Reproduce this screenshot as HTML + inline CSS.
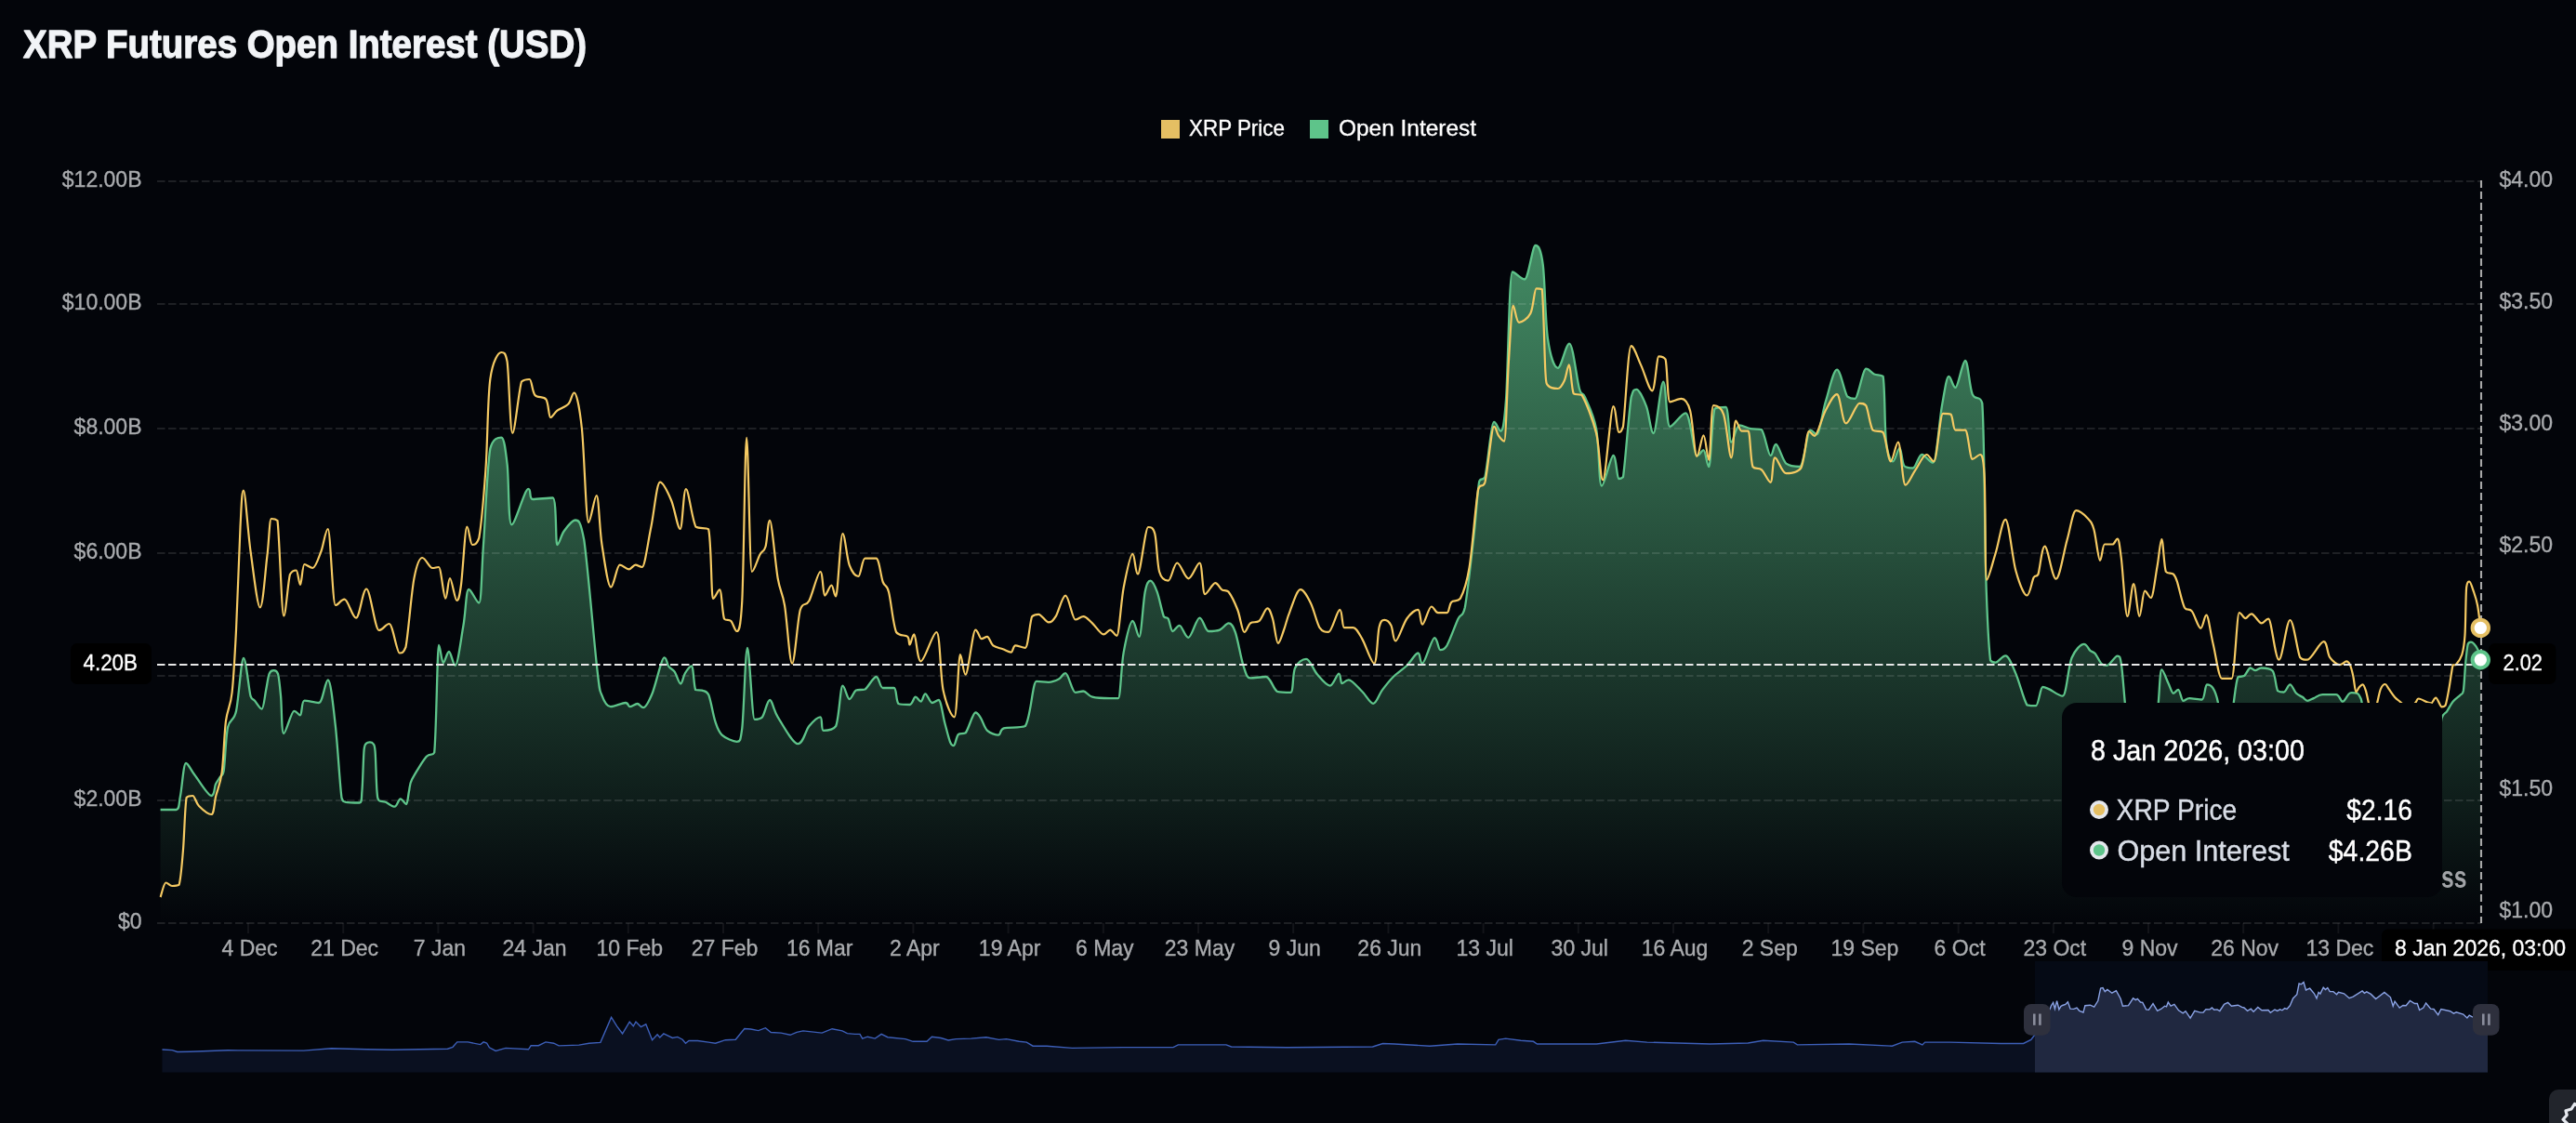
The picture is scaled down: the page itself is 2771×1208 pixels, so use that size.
<!DOCTYPE html><html><head><meta charset="utf-8"><style>html,body{margin:0;padding:0;background:#03050a;overflow:hidden}svg{display:block;will-change:transform}</style></head><body>
<svg width="2771" height="1208" viewBox="0 0 2771 1208">
<defs>
<linearGradient id="ga" gradientUnits="userSpaceOnUse" x1="0" y1="264" x2="0" y2="993"><stop offset="0" stop-color="#5ec48a" stop-opacity="0.7"/><stop offset="1" stop-color="#5ec48a" stop-opacity="0"/></linearGradient>
<linearGradient id="gsel" gradientUnits="userSpaceOnUse" x1="0" y1="1034" x2="0" y2="1153"><stop offset="0" stop-color="#1a2138"/><stop offset="1" stop-color="#242c4a"/></linearGradient>
</defs>
<rect width="2771" height="1208" fill="#03050a"/>
<text x="25" y="62" font-family="&quot;Liberation Sans&quot;, sans-serif" font-weight="bold" font-size="42" fill="#f2f4f7" stroke="#f2f4f7" stroke-width="1.3" stroke-linejoin="round" textLength="606" lengthAdjust="spacingAndGlyphs">XRP Futures Open Interest (USD)</text>
<rect x="1249" y="129" width="20" height="20" fill="#e5bf63"/>
<text x="1279" y="146" font-family="&quot;Liberation Sans&quot;, sans-serif" font-size="24" fill="#ffffff" stroke="#ffffff" stroke-width="0.35" textLength="103" lengthAdjust="spacingAndGlyphs">XRP Price</text>
<rect x="1409" y="129" width="20" height="20" fill="#5ec48a"/>
<text x="1440" y="146" font-family="&quot;Liberation Sans&quot;, sans-serif" font-size="24" fill="#ffffff" stroke="#ffffff" stroke-width="0.35" textLength="148" lengthAdjust="spacingAndGlyphs">Open Interest</text>
<text x="152.5" y="201" font-family="&quot;Liberation Sans&quot;, sans-serif" font-size="23" fill="#a9abae" stroke="#a9abae" stroke-width="0.35" text-anchor="end">$12.00B</text>
<text x="152.5" y="333" font-family="&quot;Liberation Sans&quot;, sans-serif" font-size="23" fill="#a9abae" stroke="#a9abae" stroke-width="0.35" text-anchor="end">$10.00B</text>
<text x="152.5" y="467" font-family="&quot;Liberation Sans&quot;, sans-serif" font-size="23" fill="#a9abae" stroke="#a9abae" stroke-width="0.35" text-anchor="end">$8.00B</text>
<text x="152.5" y="601" font-family="&quot;Liberation Sans&quot;, sans-serif" font-size="23" fill="#a9abae" stroke="#a9abae" stroke-width="0.35" text-anchor="end">$6.00B</text>
<text x="152.5" y="733" font-family="&quot;Liberation Sans&quot;, sans-serif" font-size="23" fill="#a9abae" stroke="#a9abae" stroke-width="0.35" text-anchor="end">$4.00B</text>
<text x="152.5" y="867" font-family="&quot;Liberation Sans&quot;, sans-serif" font-size="23" fill="#a9abae" stroke="#a9abae" stroke-width="0.35" text-anchor="end">$2.00B</text>
<text x="152.5" y="999" font-family="&quot;Liberation Sans&quot;, sans-serif" font-size="23" fill="#a9abae" stroke="#a9abae" stroke-width="0.35" text-anchor="end">$0</text>
<text x="2688.5" y="201" font-family="&quot;Liberation Sans&quot;, sans-serif" font-size="23" fill="#a9abae" stroke="#a9abae" stroke-width="0.35">$4.00</text>
<text x="2688.5" y="332" font-family="&quot;Liberation Sans&quot;, sans-serif" font-size="23" fill="#a9abae" stroke="#a9abae" stroke-width="0.35">$3.50</text>
<text x="2688.5" y="463" font-family="&quot;Liberation Sans&quot;, sans-serif" font-size="23" fill="#a9abae" stroke="#a9abae" stroke-width="0.35">$3.00</text>
<text x="2688.5" y="594" font-family="&quot;Liberation Sans&quot;, sans-serif" font-size="23" fill="#a9abae" stroke="#a9abae" stroke-width="0.35">$2.50</text>
<text x="2688.5" y="725" font-family="&quot;Liberation Sans&quot;, sans-serif" font-size="23" fill="#a9abae" stroke="#a9abae" stroke-width="0.35">$2.00</text>
<text x="2688.5" y="856" font-family="&quot;Liberation Sans&quot;, sans-serif" font-size="23" fill="#a9abae" stroke="#a9abae" stroke-width="0.35">$1.50</text>
<text x="2688.5" y="987" font-family="&quot;Liberation Sans&quot;, sans-serif" font-size="23" fill="#a9abae" stroke="#a9abae" stroke-width="0.35">$1.00</text>
<line x1="267.0" y1="993" x2="267.0" y2="1004" stroke="#131419" stroke-width="2"/>
<line x1="369.2" y1="993" x2="369.2" y2="1004" stroke="#131419" stroke-width="2"/>
<line x1="471.4" y1="993" x2="471.4" y2="1004" stroke="#131419" stroke-width="2"/>
<line x1="573.6" y1="993" x2="573.6" y2="1004" stroke="#131419" stroke-width="2"/>
<line x1="675.8" y1="993" x2="675.8" y2="1004" stroke="#131419" stroke-width="2"/>
<line x1="778.0" y1="993" x2="778.0" y2="1004" stroke="#131419" stroke-width="2"/>
<line x1="880.2" y1="993" x2="880.2" y2="1004" stroke="#131419" stroke-width="2"/>
<line x1="982.4" y1="993" x2="982.4" y2="1004" stroke="#131419" stroke-width="2"/>
<line x1="1084.6" y1="993" x2="1084.6" y2="1004" stroke="#131419" stroke-width="2"/>
<line x1="1186.8000000000002" y1="993" x2="1186.8000000000002" y2="1004" stroke="#131419" stroke-width="2"/>
<line x1="1289.0" y1="993" x2="1289.0" y2="1004" stroke="#131419" stroke-width="2"/>
<line x1="1391.2" y1="993" x2="1391.2" y2="1004" stroke="#131419" stroke-width="2"/>
<line x1="1493.4" y1="993" x2="1493.4" y2="1004" stroke="#131419" stroke-width="2"/>
<line x1="1595.6000000000001" y1="993" x2="1595.6000000000001" y2="1004" stroke="#131419" stroke-width="2"/>
<line x1="1697.8" y1="993" x2="1697.8" y2="1004" stroke="#131419" stroke-width="2"/>
<line x1="1800.0" y1="993" x2="1800.0" y2="1004" stroke="#131419" stroke-width="2"/>
<line x1="1902.2" y1="993" x2="1902.2" y2="1004" stroke="#131419" stroke-width="2"/>
<line x1="2004.4" y1="993" x2="2004.4" y2="1004" stroke="#131419" stroke-width="2"/>
<line x1="2106.6000000000004" y1="993" x2="2106.6000000000004" y2="1004" stroke="#131419" stroke-width="2"/>
<line x1="2208.8" y1="993" x2="2208.8" y2="1004" stroke="#131419" stroke-width="2"/>
<line x1="2311.0" y1="993" x2="2311.0" y2="1004" stroke="#131419" stroke-width="2"/>
<line x1="2413.2000000000003" y1="993" x2="2413.2000000000003" y2="1004" stroke="#131419" stroke-width="2"/>
<line x1="2515.4" y1="993" x2="2515.4" y2="1004" stroke="#131419" stroke-width="2"/>
<line x1="2617.6" y1="993" x2="2617.6" y2="1004" stroke="#131419" stroke-width="2"/>
<text x="268.5" y="1028" font-family="&quot;Liberation Sans&quot;, sans-serif" font-size="23" fill="#a9abae" stroke="#a9abae" stroke-width="0.35" text-anchor="middle">4 Dec</text>
<text x="370.7" y="1028" font-family="&quot;Liberation Sans&quot;, sans-serif" font-size="23" fill="#a9abae" stroke="#a9abae" stroke-width="0.35" text-anchor="middle">21 Dec</text>
<text x="472.9" y="1028" font-family="&quot;Liberation Sans&quot;, sans-serif" font-size="23" fill="#a9abae" stroke="#a9abae" stroke-width="0.35" text-anchor="middle">7 Jan</text>
<text x="575.1" y="1028" font-family="&quot;Liberation Sans&quot;, sans-serif" font-size="23" fill="#a9abae" stroke="#a9abae" stroke-width="0.35" text-anchor="middle">24 Jan</text>
<text x="677.3" y="1028" font-family="&quot;Liberation Sans&quot;, sans-serif" font-size="23" fill="#a9abae" stroke="#a9abae" stroke-width="0.35" text-anchor="middle">10 Feb</text>
<text x="779.5" y="1028" font-family="&quot;Liberation Sans&quot;, sans-serif" font-size="23" fill="#a9abae" stroke="#a9abae" stroke-width="0.35" text-anchor="middle">27 Feb</text>
<text x="881.7" y="1028" font-family="&quot;Liberation Sans&quot;, sans-serif" font-size="23" fill="#a9abae" stroke="#a9abae" stroke-width="0.35" text-anchor="middle">16 Mar</text>
<text x="983.9" y="1028" font-family="&quot;Liberation Sans&quot;, sans-serif" font-size="23" fill="#a9abae" stroke="#a9abae" stroke-width="0.35" text-anchor="middle">2 Apr</text>
<text x="1086.1" y="1028" font-family="&quot;Liberation Sans&quot;, sans-serif" font-size="23" fill="#a9abae" stroke="#a9abae" stroke-width="0.35" text-anchor="middle">19 Apr</text>
<text x="1188.3" y="1028" font-family="&quot;Liberation Sans&quot;, sans-serif" font-size="23" fill="#a9abae" stroke="#a9abae" stroke-width="0.35" text-anchor="middle">6 May</text>
<text x="1290.5" y="1028" font-family="&quot;Liberation Sans&quot;, sans-serif" font-size="23" fill="#a9abae" stroke="#a9abae" stroke-width="0.35" text-anchor="middle">23 May</text>
<text x="1392.7" y="1028" font-family="&quot;Liberation Sans&quot;, sans-serif" font-size="23" fill="#a9abae" stroke="#a9abae" stroke-width="0.35" text-anchor="middle">9 Jun</text>
<text x="1494.9" y="1028" font-family="&quot;Liberation Sans&quot;, sans-serif" font-size="23" fill="#a9abae" stroke="#a9abae" stroke-width="0.35" text-anchor="middle">26 Jun</text>
<text x="1597.1" y="1028" font-family="&quot;Liberation Sans&quot;, sans-serif" font-size="23" fill="#a9abae" stroke="#a9abae" stroke-width="0.35" text-anchor="middle">13 Jul</text>
<text x="1699.3" y="1028" font-family="&quot;Liberation Sans&quot;, sans-serif" font-size="23" fill="#a9abae" stroke="#a9abae" stroke-width="0.35" text-anchor="middle">30 Jul</text>
<text x="1801.5" y="1028" font-family="&quot;Liberation Sans&quot;, sans-serif" font-size="23" fill="#a9abae" stroke="#a9abae" stroke-width="0.35" text-anchor="middle">16 Aug</text>
<text x="1903.7" y="1028" font-family="&quot;Liberation Sans&quot;, sans-serif" font-size="23" fill="#a9abae" stroke="#a9abae" stroke-width="0.35" text-anchor="middle">2 Sep</text>
<text x="2005.9" y="1028" font-family="&quot;Liberation Sans&quot;, sans-serif" font-size="23" fill="#a9abae" stroke="#a9abae" stroke-width="0.35" text-anchor="middle">19 Sep</text>
<text x="2108.1" y="1028" font-family="&quot;Liberation Sans&quot;, sans-serif" font-size="23" fill="#a9abae" stroke="#a9abae" stroke-width="0.35" text-anchor="middle">6 Oct</text>
<text x="2210.3" y="1028" font-family="&quot;Liberation Sans&quot;, sans-serif" font-size="23" fill="#a9abae" stroke="#a9abae" stroke-width="0.35" text-anchor="middle">23 Oct</text>
<text x="2312.5" y="1028" font-family="&quot;Liberation Sans&quot;, sans-serif" font-size="23" fill="#a9abae" stroke="#a9abae" stroke-width="0.35" text-anchor="middle">9 Nov</text>
<text x="2414.7" y="1028" font-family="&quot;Liberation Sans&quot;, sans-serif" font-size="23" fill="#a9abae" stroke="#a9abae" stroke-width="0.35" text-anchor="middle">26 Nov</text>
<text x="2516.9" y="1028" font-family="&quot;Liberation Sans&quot;, sans-serif" font-size="23" fill="#a9abae" stroke="#a9abae" stroke-width="0.35" text-anchor="middle">13 Dec</text>
<path d="M172.6,871.0 C175.4,871.0 186.0,871.0 189.6,871.0 C193.2,871.0 192.3,864.3 194.0,856.0 C195.7,847.7 197.4,821.0 200.0,821.0 C202.6,821.0 204.9,828.0 209.5,833.8 C214.1,839.6 223.6,856.0 227.3,856.0 C231.1,856.0 230.4,846.8 232.0,843.5 C233.6,840.2 235.2,838.4 236.6,836.0 C238.0,833.6 239.3,836.0 240.7,829.0 C242.1,820.1 242.8,793.3 245.0,782.6 C247.2,771.9 251.2,777.4 254.0,765.0 C256.8,752.6 259.4,708.0 262.0,708.0 C264.6,708.0 267.6,741.4 269.6,749.0 C271.6,753.7 272.0,751.4 274.0,753.7 C276.0,756.0 279.6,762.6 281.6,762.6 C283.6,762.6 284.8,748.9 286.1,742.6 C287.4,736.3 288.2,728.4 289.6,724.8 C291.0,721.2 292.9,721.2 294.5,721.2 C296.1,721.2 297.7,721.2 299.0,724.8 C300.3,729.5 301.1,738.6 302.1,749.3 C303.1,760.0 302.8,789.0 305.2,789.0 C307.6,789.0 313.3,764.8 316.3,764.8 C319.3,764.8 321.1,769.3 323.0,769.3 C324.9,769.3 324.2,753.7 327.5,753.7 C330.8,753.7 338.8,756.0 343.0,756.0 C347.2,756.0 349.8,731.5 352.8,731.5 C355.8,731.5 358.4,759.3 360.8,780.4 C363.2,801.5 365.6,844.6 367.5,858.3 C369.4,862.8 368.8,861.9 372.0,862.8 C375.2,863.5 383.8,863.5 386.7,863.5 C389.5,863.5 388.7,859.5 389.5,850.0 C390.3,840.5 390.8,815.1 391.6,806.7 C392.4,799.5 393.2,800.9 394.2,799.5 C395.2,798.3 396.6,798.3 397.8,798.3 C399.0,798.3 400.4,798.3 401.4,800.0 C402.4,801.7 402.9,800.2 403.6,808.5 C404.3,816.8 404.7,841.2 405.4,850.0 C406.1,858.8 406.1,858.9 407.6,861.0 C409.2,862.8 411.9,861.7 414.7,862.8 C417.5,863.9 421.8,867.7 424.5,867.7 C427.2,867.7 428.7,859.3 430.8,859.3 C432.9,859.3 435.5,865.0 437.0,865.0 C438.5,865.0 439.0,855.5 440.0,851.0 C441.0,846.5 440.1,844.5 443.2,838.3 C446.3,832.1 454.8,818.6 458.8,813.8 C462.8,809.5 465.0,813.8 467.2,809.5 C469.4,789.5 470.4,694.0 472.0,694.0 C473.6,694.0 475.0,713.0 476.8,713.0 C478.6,713.0 480.8,701.0 483.0,701.0 C485.2,701.0 487.2,715.8 489.8,715.8 C492.4,715.8 496.1,686.1 498.5,672.5 C500.9,658.9 501.4,634.0 504.2,634.0 C507.0,634.0 512.7,648.5 515.3,648.5 C517.9,648.5 518.0,613.6 520.0,586.0 C522.0,558.4 524.1,501.8 527.3,482.6 C530.5,470.6 536.2,470.6 539.3,470.6 C542.3,470.6 543.8,483.8 545.6,499.4 C547.5,515.0 546.6,564.3 550.4,564.3 C554.2,564.3 564.4,525.9 568.2,525.9 C572.0,525.9 568.6,537.0 573.0,537.0 C577.4,537.0 590.2,535.5 594.6,535.5 C599.0,535.5 597.4,586.0 599.4,586.0 C601.4,586.0 603.4,575.9 606.6,571.5 C609.8,567.1 615.1,559.5 618.7,559.5 C622.3,559.5 624.3,559.5 628.3,581.0 C632.2,607.8 639.2,692.4 642.4,720.1 C645.5,747.4 644.8,740.7 647.2,747.4 C649.6,754.1 652.5,760.2 656.8,760.2 C661.1,760.2 669.3,756.0 672.8,756.0 C676.3,756.0 675.5,760.2 677.6,760.2 C679.7,760.2 683.2,757.0 685.6,757.0 C688.0,757.0 689.4,761.2 692.1,761.2 C694.8,761.2 698.0,754.8 701.7,745.8 C705.4,736.8 711.6,707.3 714.5,707.3 C717.4,707.3 717.4,714.3 719.3,716.9 C721.2,719.5 723.6,719.6 725.7,722.7 C727.8,725.8 730.2,735.5 732.1,735.5 C734.0,735.5 735.0,727.2 737.0,724.0 C739.0,720.8 742.1,716.3 744.0,716.3 C745.9,716.3 746.3,737.6 748.1,742.0 C749.9,742.6 752.6,742.0 755.0,742.6 C757.4,743.5 759.8,742.6 762.2,747.3 C764.6,752.9 767.0,769.0 769.4,776.2 C771.8,783.4 772.8,787.0 776.6,790.6 C780.5,794.2 788.9,797.8 792.5,797.8 C796.1,797.8 796.4,797.8 798.3,783.4 C800.2,766.6 801.8,696.8 804.0,696.8 C806.2,696.8 809.0,773.8 811.7,773.8 C814.4,773.8 817.3,773.8 820.0,771.3 C822.7,767.8 825.3,753.0 828.1,753.0 C830.9,753.0 831.7,763.4 836.7,771.3 C841.8,779.2 852.8,800.2 858.4,800.2 C864.0,800.2 866.4,785.8 870.4,781.0 C874.4,776.2 879.8,771.3 882.4,771.3 C885.0,771.3 883.0,785.8 885.8,785.8 C888.6,785.8 895.8,785.8 899.2,781.0 C902.6,773.0 904.0,737.7 906.4,737.7 C908.8,737.7 911.3,752.0 913.7,752.0 C916.1,752.0 918.1,744.2 920.9,742.5 C923.7,741.5 926.9,742.5 930.5,741.5 C934.1,739.1 939.3,728.0 942.5,728.0 C945.7,728.0 946.5,740.0 949.7,740.0 C952.9,740.0 958.9,740.0 961.7,740.0 C964.5,740.0 963.7,754.0 966.5,757.0 C969.3,758.0 975.6,758.0 978.6,758.0 C981.6,758.0 982.8,749.7 984.8,749.7 C986.8,749.7 988.8,754.5 990.6,754.5 C992.4,754.5 993.4,746.3 995.4,746.3 C997.4,746.3 1000.2,756.0 1002.6,756.0 C1005.0,756.0 1007.5,753.0 1009.8,753.0 C1012.1,753.0 1014.4,770.5 1016.4,778.0 C1018.4,785.5 1020.4,794.0 1022.0,798.0 C1023.6,802.0 1024.5,802.0 1026.0,802.0 C1027.5,802.0 1028.7,792.4 1030.8,790.1 C1032.9,788.2 1035.7,790.1 1038.8,788.2 C1041.9,784.3 1046.5,766.5 1049.2,766.5 C1051.9,766.5 1052.9,769.1 1055.0,772.3 C1057.1,775.5 1058.8,782.8 1062.0,785.8 C1065.2,788.8 1071.0,790.6 1074.0,790.6 C1077.0,790.6 1075.0,785.0 1079.8,783.4 C1084.6,781.8 1097.1,783.4 1102.9,781.0 C1108.8,772.6 1110.7,732.9 1114.9,732.9 C1119.1,732.9 1123.9,733.8 1127.9,733.8 C1131.9,733.8 1135.9,732.1 1138.9,730.5 C1142.0,728.9 1143.2,724.2 1146.2,724.2 C1149.2,724.2 1153.5,744.9 1156.7,744.9 C1159.9,744.9 1162.4,743.5 1165.4,743.5 C1168.5,743.5 1170.2,748.4 1175.0,749.7 C1179.8,751.0 1189.5,751.2 1194.2,751.2 C1198.9,751.2 1200.5,751.2 1202.9,751.2 C1205.3,751.2 1206.1,715.5 1208.7,701.6 C1211.3,687.7 1215.5,668.0 1218.3,668.0 C1221.1,668.0 1223.3,684.8 1225.5,684.8 C1227.7,684.8 1229.7,646.7 1231.7,636.7 C1233.7,626.7 1235.3,624.7 1237.5,624.7 C1239.7,624.7 1242.3,630.3 1244.7,636.7 C1247.1,643.1 1249.9,658.4 1251.9,663.2 C1253.9,665.6 1255.1,663.2 1256.7,665.6 C1258.3,668.2 1259.5,679.0 1261.5,679.0 C1263.5,679.0 1266.0,672.8 1268.8,672.8 C1271.6,672.8 1274.8,685.8 1278.4,685.8 C1282.0,685.8 1286.8,664.6 1290.4,664.6 C1294.0,664.6 1296.4,679.0 1300.0,679.0 C1303.6,679.0 1308.4,679.0 1312.0,677.6 C1315.6,676.2 1318.8,670.4 1321.6,670.4 C1324.4,670.4 1326.1,672.4 1328.8,680.0 C1331.5,687.6 1334.8,707.8 1337.5,716.0 C1340.2,724.2 1341.0,729.4 1345.0,729.4 C1349.0,729.4 1357.0,728.0 1361.8,728.0 C1366.6,728.0 1369.4,741.0 1373.8,743.8 C1378.2,744.8 1385.1,744.8 1388.3,744.8 C1391.5,744.8 1390.3,724.4 1393.1,718.4 C1395.9,712.4 1401.1,708.8 1405.1,708.8 C1409.1,708.8 1412.8,720.8 1417.1,725.6 C1421.3,730.4 1426.8,737.6 1430.6,737.6 C1434.4,737.6 1438.0,724.6 1440.2,724.6 C1442.4,724.6 1441.8,735.2 1443.6,735.2 C1445.4,735.2 1447.2,731.3 1450.8,731.3 C1454.4,731.3 1460.8,739.5 1465.2,743.8 C1469.6,748.0 1473.6,756.8 1477.2,756.8 C1480.8,756.8 1483.2,747.2 1486.8,742.4 C1490.4,737.6 1494.4,732.4 1498.8,728.0 C1503.2,723.6 1508.9,720.2 1513.3,716.0 C1517.7,711.8 1522.5,702.5 1525.3,702.5 C1528.1,702.5 1527.1,713.6 1530.1,713.6 C1533.1,713.6 1539.9,686.2 1543.1,686.2 C1546.3,686.2 1547.1,699.1 1549.3,699.1 C1551.5,699.1 1553.3,699.1 1556.5,694.3 C1559.7,688.7 1565.4,672.3 1568.6,665.5 C1571.8,658.7 1573.0,665.5 1575.8,653.5 C1578.6,638.7 1582.8,599.1 1585.4,576.5 C1588.0,553.9 1589.2,528.5 1591.2,517.9 C1593.2,513.1 1594.8,517.9 1597.4,513.1 C1600.0,502.4 1604.2,453.9 1607.0,453.9 C1609.8,453.9 1612.0,463.6 1614.2,463.6 C1616.4,463.6 1617.9,458.4 1620.0,429.9 C1622.1,401.4 1623.5,292.5 1626.8,292.5 C1630.1,292.5 1635.8,300.5 1640.0,300.5 C1644.2,300.5 1648.4,264.0 1651.7,264.0 C1655.0,264.0 1657.5,267.7 1659.7,284.5 C1661.9,301.3 1662.3,346.1 1665.0,364.7 C1667.7,383.2 1671.9,395.8 1675.8,395.8 C1679.7,395.8 1684.3,369.6 1688.2,369.6 C1692.1,369.6 1696.1,408.4 1698.9,418.0 C1701.7,427.5 1702.1,420.3 1705.1,427.5 C1708.1,434.7 1714.1,445.3 1717.1,461.2 C1720.1,477.1 1719.9,522.7 1722.9,522.7 C1726.0,522.7 1732.4,490.0 1735.4,490.0 C1738.5,490.0 1739.4,515.0 1741.2,515.0 C1743.0,515.0 1743.8,515.0 1746.0,513.1 C1748.2,498.5 1752.2,443.2 1754.6,427.5 C1757.0,418.8 1757.7,418.8 1760.4,418.8 C1763.1,418.8 1768.0,429.2 1771.0,437.1 C1774.0,445.0 1775.7,466.0 1778.7,466.0 C1781.7,466.0 1786.2,410.7 1789.2,410.7 C1792.2,410.7 1792.4,458.8 1796.4,458.8 C1800.4,458.8 1808.5,444.3 1813.3,444.3 C1818.1,444.3 1822.1,490.0 1825.3,490.0 C1828.5,490.0 1830.3,484.2 1832.5,484.2 C1834.7,484.2 1836.3,502.0 1838.3,502.0 C1840.3,502.0 1841.5,450.2 1844.5,439.5 C1847.5,438.0 1853.5,438.0 1856.5,438.0 C1859.5,438.0 1859.9,475.6 1862.3,475.6 C1864.7,475.6 1867.5,457.3 1871.0,457.3 C1874.5,457.3 1879.0,460.4 1883.0,461.2 C1887.0,462.0 1891.4,461.2 1895.0,462.1 C1898.6,466.9 1902.0,490.0 1904.6,490.0 C1907.2,490.0 1907.6,478.0 1910.4,478.0 C1913.2,478.0 1917.2,494.7 1921.4,498.7 C1925.7,502.0 1931.6,502.0 1935.9,502.0 C1940.2,502.0 1944.1,462.6 1947.2,462.6 C1950.3,462.6 1951.6,467.4 1954.4,467.4 C1957.2,467.4 1960.4,442.9 1964.0,431.3 C1967.6,419.7 1972.2,397.7 1976.0,397.7 C1979.8,397.7 1983.9,421.3 1987.1,426.5 C1990.3,428.9 1991.9,428.9 1995.3,428.9 C1998.7,428.9 2003.8,396.7 2007.3,396.7 C2010.8,396.7 2013.0,401.1 2016.0,402.5 C2019.0,403.9 2023.4,402.5 2025.6,404.9 C2027.8,416.9 2027.1,459.4 2028.9,474.6 C2030.7,489.8 2033.8,496.3 2036.2,496.3 C2038.6,496.3 2041.4,481.8 2043.4,481.8 C2045.4,481.8 2045.8,497.4 2048.2,501.0 C2050.6,503.5 2054.6,503.5 2057.8,503.5 C2061.0,503.5 2063.8,489.0 2067.4,489.0 C2071.0,489.0 2075.8,497.7 2079.4,497.7 C2083.0,497.7 2086.2,451.7 2089.0,436.2 C2091.8,420.7 2093.9,404.9 2096.3,404.9 C2098.7,404.9 2100.6,416.9 2103.5,416.9 C2106.4,416.9 2111.0,388.0 2114.0,388.0 C2117.0,388.0 2118.6,416.5 2121.7,424.1 C2124.8,431.7 2129.9,424.1 2132.3,433.8 C2134.7,466.2 2134.8,572.7 2136.2,618.8 C2137.6,664.9 2139.2,694.6 2141.0,710.2 C2142.8,712.6 2144.0,712.6 2146.7,712.6 C2149.4,712.6 2153.7,705.4 2157.3,705.4 C2160.9,705.4 2164.6,715.8 2168.4,724.6 C2172.2,733.4 2176.8,752.5 2180.4,758.3 C2184.0,759.2 2187.2,759.2 2190.0,759.2 C2192.8,759.2 2194.8,739.0 2197.2,739.0 C2199.6,739.0 2200.8,739.8 2204.4,741.4 C2208.0,743.0 2214.8,748.7 2218.8,748.7 C2222.8,748.7 2224.7,717.1 2228.5,707.8 C2232.3,698.5 2238.4,692.9 2241.7,692.9 C2245.0,692.9 2246.4,698.1 2248.4,699.8 C2250.4,701.5 2251.7,700.7 2253.7,703.0 C2255.7,705.3 2258.3,711.6 2260.4,713.7 C2262.5,715.9 2263.6,715.9 2266.5,715.9 C2269.4,715.9 2275.1,705.7 2277.7,705.7 C2280.2,705.7 2280.5,705.7 2281.8,713.7 C2283.2,722.0 2284.4,741.3 2285.8,755.7 C2287.2,770.1 2285.8,800.0 2290.0,800.0 C2295.4,800.0 2312.7,800.0 2318.0,800.0 C2321.8,800.0 2320.6,769.0 2321.8,755.7 C2323.0,742.4 2323.5,720.4 2325.3,720.4 C2327.1,720.4 2330.4,730.9 2332.5,735.1 C2334.6,739.3 2336.1,745.8 2337.9,745.8 C2339.7,745.8 2341.4,741.8 2343.2,741.8 C2345.0,741.8 2346.5,753.8 2348.5,753.8 C2350.5,753.8 2351.8,751.1 2355.2,751.1 C2358.5,751.1 2365.5,752.5 2368.6,752.5 C2371.7,752.5 2371.9,736.4 2373.9,736.4 C2375.9,736.4 2378.6,737.2 2380.6,740.4 C2382.6,743.6 2384.3,747.4 2385.9,755.7 C2387.5,764.0 2387.8,790.0 2390.0,790.0 C2392.2,790.0 2396.9,790.0 2399.0,790.0 C2401.1,790.0 2401.4,766.0 2402.8,755.7 C2404.2,745.4 2405.4,733.2 2407.3,728.4 C2409.2,727.1 2411.8,728.4 2414.0,727.1 C2416.2,725.5 2418.7,718.5 2420.7,718.5 C2422.7,718.5 2424.1,721.2 2426.1,721.2 C2428.1,721.2 2429.6,718.5 2432.7,718.5 C2435.8,718.5 2441.8,718.5 2444.7,721.7 C2447.6,725.8 2448.1,739.3 2450.1,743.1 C2452.1,744.5 2454.5,744.5 2456.7,744.5 C2458.9,744.5 2461.2,736.4 2463.4,736.4 C2465.6,736.4 2467.9,743.6 2470.1,745.8 C2472.3,748.0 2474.8,748.5 2476.8,749.8 C2478.8,751.1 2480.1,753.8 2482.1,753.8 C2484.1,753.8 2486.1,752.2 2488.8,751.1 C2491.5,750.0 2494.2,747.1 2498.2,747.1 C2502.2,747.1 2509.3,747.1 2512.9,747.1 C2516.5,747.1 2517.8,754.7 2520.0,754.7 C2522.2,754.7 2524.8,748.3 2526.4,746.7 C2528.0,745.1 2528.0,745.1 2529.6,745.1 C2531.2,745.1 2534.4,745.1 2536.0,745.9 C2537.6,746.8 2538.4,748.9 2539.2,750.7 C2540.0,752.6 2539.8,750.7 2540.8,757.0 C2541.8,765.2 2540.8,800.0 2545.0,800.0 C2558.2,800.0 2606.4,800.0 2620.0,800.0 C2626.6,800.0 2624.6,778.1 2626.6,772.3 C2628.6,766.5 2630.2,768.0 2632.2,765.1 C2634.2,762.2 2636.2,757.6 2638.6,754.7 C2641.0,751.8 2644.8,749.5 2646.7,747.5 C2648.6,745.5 2649.0,747.5 2649.9,742.7 C2650.8,736.8 2651.5,720.5 2652.3,712.2 C2653.1,703.9 2653.8,696.6 2654.7,693.0 C2655.6,690.6 2656.4,690.6 2657.9,690.6 C2659.4,690.6 2661.9,693.1 2663.5,695.4 C2665.1,697.7 2666.7,701.8 2667.5,704.2 C2668.3,706.6 2668.2,708.9 2668.3,709.8 L2668.3,993 L172.6,993 Z" fill="url(#ga)"/>
<line x1="169" y1="195" x2="2669" y2="195" stroke="#ffffff" stroke-opacity="0.11" stroke-width="2" stroke-dasharray="8.5 3.5"/>
<line x1="169" y1="327" x2="2669" y2="327" stroke="#ffffff" stroke-opacity="0.11" stroke-width="2" stroke-dasharray="8.5 3.5"/>
<line x1="169" y1="461" x2="2669" y2="461" stroke="#ffffff" stroke-opacity="0.11" stroke-width="2" stroke-dasharray="8.5 3.5"/>
<line x1="169" y1="595" x2="2669" y2="595" stroke="#ffffff" stroke-opacity="0.11" stroke-width="2" stroke-dasharray="8.5 3.5"/>
<line x1="169" y1="727" x2="2669" y2="727" stroke="#ffffff" stroke-opacity="0.11" stroke-width="2" stroke-dasharray="8.5 3.5"/>
<line x1="169" y1="861" x2="2669" y2="861" stroke="#ffffff" stroke-opacity="0.11" stroke-width="2" stroke-dasharray="8.5 3.5"/>
<line x1="169" y1="993" x2="2669" y2="993" stroke="#ffffff" stroke-opacity="0.11" stroke-width="2" stroke-dasharray="8.5 3.5"/>
<path d="M172.6,871.0 C175.4,871.0 186.0,871.0 189.6,871.0 C193.2,871.0 192.3,864.3 194.0,856.0 C195.7,847.7 197.4,821.0 200.0,821.0 C202.6,821.0 204.9,828.0 209.5,833.8 C214.1,839.6 223.6,856.0 227.3,856.0 C231.1,856.0 230.4,846.8 232.0,843.5 C233.6,840.2 235.2,838.4 236.6,836.0 C238.0,833.6 239.3,836.0 240.7,829.0 C242.1,820.1 242.8,793.3 245.0,782.6 C247.2,771.9 251.2,777.4 254.0,765.0 C256.8,752.6 259.4,708.0 262.0,708.0 C264.6,708.0 267.6,741.4 269.6,749.0 C271.6,753.7 272.0,751.4 274.0,753.7 C276.0,756.0 279.6,762.6 281.6,762.6 C283.6,762.6 284.8,748.9 286.1,742.6 C287.4,736.3 288.2,728.4 289.6,724.8 C291.0,721.2 292.9,721.2 294.5,721.2 C296.1,721.2 297.7,721.2 299.0,724.8 C300.3,729.5 301.1,738.6 302.1,749.3 C303.1,760.0 302.8,789.0 305.2,789.0 C307.6,789.0 313.3,764.8 316.3,764.8 C319.3,764.8 321.1,769.3 323.0,769.3 C324.9,769.3 324.2,753.7 327.5,753.7 C330.8,753.7 338.8,756.0 343.0,756.0 C347.2,756.0 349.8,731.5 352.8,731.5 C355.8,731.5 358.4,759.3 360.8,780.4 C363.2,801.5 365.6,844.6 367.5,858.3 C369.4,862.8 368.8,861.9 372.0,862.8 C375.2,863.5 383.8,863.5 386.7,863.5 C389.5,863.5 388.7,859.5 389.5,850.0 C390.3,840.5 390.8,815.1 391.6,806.7 C392.4,799.5 393.2,800.9 394.2,799.5 C395.2,798.3 396.6,798.3 397.8,798.3 C399.0,798.3 400.4,798.3 401.4,800.0 C402.4,801.7 402.9,800.2 403.6,808.5 C404.3,816.8 404.7,841.2 405.4,850.0 C406.1,858.8 406.1,858.9 407.6,861.0 C409.2,862.8 411.9,861.7 414.7,862.8 C417.5,863.9 421.8,867.7 424.5,867.7 C427.2,867.7 428.7,859.3 430.8,859.3 C432.9,859.3 435.5,865.0 437.0,865.0 C438.5,865.0 439.0,855.5 440.0,851.0 C441.0,846.5 440.1,844.5 443.2,838.3 C446.3,832.1 454.8,818.6 458.8,813.8 C462.8,809.5 465.0,813.8 467.2,809.5 C469.4,789.5 470.4,694.0 472.0,694.0 C473.6,694.0 475.0,713.0 476.8,713.0 C478.6,713.0 480.8,701.0 483.0,701.0 C485.2,701.0 487.2,715.8 489.8,715.8 C492.4,715.8 496.1,686.1 498.5,672.5 C500.9,658.9 501.4,634.0 504.2,634.0 C507.0,634.0 512.7,648.5 515.3,648.5 C517.9,648.5 518.0,613.6 520.0,586.0 C522.0,558.4 524.1,501.8 527.3,482.6 C530.5,470.6 536.2,470.6 539.3,470.6 C542.3,470.6 543.8,483.8 545.6,499.4 C547.5,515.0 546.6,564.3 550.4,564.3 C554.2,564.3 564.4,525.9 568.2,525.9 C572.0,525.9 568.6,537.0 573.0,537.0 C577.4,537.0 590.2,535.5 594.6,535.5 C599.0,535.5 597.4,586.0 599.4,586.0 C601.4,586.0 603.4,575.9 606.6,571.5 C609.8,567.1 615.1,559.5 618.7,559.5 C622.3,559.5 624.3,559.5 628.3,581.0 C632.2,607.8 639.2,692.4 642.4,720.1 C645.5,747.4 644.8,740.7 647.2,747.4 C649.6,754.1 652.5,760.2 656.8,760.2 C661.1,760.2 669.3,756.0 672.8,756.0 C676.3,756.0 675.5,760.2 677.6,760.2 C679.7,760.2 683.2,757.0 685.6,757.0 C688.0,757.0 689.4,761.2 692.1,761.2 C694.8,761.2 698.0,754.8 701.7,745.8 C705.4,736.8 711.6,707.3 714.5,707.3 C717.4,707.3 717.4,714.3 719.3,716.9 C721.2,719.5 723.6,719.6 725.7,722.7 C727.8,725.8 730.2,735.5 732.1,735.5 C734.0,735.5 735.0,727.2 737.0,724.0 C739.0,720.8 742.1,716.3 744.0,716.3 C745.9,716.3 746.3,737.6 748.1,742.0 C749.9,742.6 752.6,742.0 755.0,742.6 C757.4,743.5 759.8,742.6 762.2,747.3 C764.6,752.9 767.0,769.0 769.4,776.2 C771.8,783.4 772.8,787.0 776.6,790.6 C780.5,794.2 788.9,797.8 792.5,797.8 C796.1,797.8 796.4,797.8 798.3,783.4 C800.2,766.6 801.8,696.8 804.0,696.8 C806.2,696.8 809.0,773.8 811.7,773.8 C814.4,773.8 817.3,773.8 820.0,771.3 C822.7,767.8 825.3,753.0 828.1,753.0 C830.9,753.0 831.7,763.4 836.7,771.3 C841.8,779.2 852.8,800.2 858.4,800.2 C864.0,800.2 866.4,785.8 870.4,781.0 C874.4,776.2 879.8,771.3 882.4,771.3 C885.0,771.3 883.0,785.8 885.8,785.8 C888.6,785.8 895.8,785.8 899.2,781.0 C902.6,773.0 904.0,737.7 906.4,737.7 C908.8,737.7 911.3,752.0 913.7,752.0 C916.1,752.0 918.1,744.2 920.9,742.5 C923.7,741.5 926.9,742.5 930.5,741.5 C934.1,739.1 939.3,728.0 942.5,728.0 C945.7,728.0 946.5,740.0 949.7,740.0 C952.9,740.0 958.9,740.0 961.7,740.0 C964.5,740.0 963.7,754.0 966.5,757.0 C969.3,758.0 975.6,758.0 978.6,758.0 C981.6,758.0 982.8,749.7 984.8,749.7 C986.8,749.7 988.8,754.5 990.6,754.5 C992.4,754.5 993.4,746.3 995.4,746.3 C997.4,746.3 1000.2,756.0 1002.6,756.0 C1005.0,756.0 1007.5,753.0 1009.8,753.0 C1012.1,753.0 1014.4,770.5 1016.4,778.0 C1018.4,785.5 1020.4,794.0 1022.0,798.0 C1023.6,802.0 1024.5,802.0 1026.0,802.0 C1027.5,802.0 1028.7,792.4 1030.8,790.1 C1032.9,788.2 1035.7,790.1 1038.8,788.2 C1041.9,784.3 1046.5,766.5 1049.2,766.5 C1051.9,766.5 1052.9,769.1 1055.0,772.3 C1057.1,775.5 1058.8,782.8 1062.0,785.8 C1065.2,788.8 1071.0,790.6 1074.0,790.6 C1077.0,790.6 1075.0,785.0 1079.8,783.4 C1084.6,781.8 1097.1,783.4 1102.9,781.0 C1108.8,772.6 1110.7,732.9 1114.9,732.9 C1119.1,732.9 1123.9,733.8 1127.9,733.8 C1131.9,733.8 1135.9,732.1 1138.9,730.5 C1142.0,728.9 1143.2,724.2 1146.2,724.2 C1149.2,724.2 1153.5,744.9 1156.7,744.9 C1159.9,744.9 1162.4,743.5 1165.4,743.5 C1168.5,743.5 1170.2,748.4 1175.0,749.7 C1179.8,751.0 1189.5,751.2 1194.2,751.2 C1198.9,751.2 1200.5,751.2 1202.9,751.2 C1205.3,751.2 1206.1,715.5 1208.7,701.6 C1211.3,687.7 1215.5,668.0 1218.3,668.0 C1221.1,668.0 1223.3,684.8 1225.5,684.8 C1227.7,684.8 1229.7,646.7 1231.7,636.7 C1233.7,626.7 1235.3,624.7 1237.5,624.7 C1239.7,624.7 1242.3,630.3 1244.7,636.7 C1247.1,643.1 1249.9,658.4 1251.9,663.2 C1253.9,665.6 1255.1,663.2 1256.7,665.6 C1258.3,668.2 1259.5,679.0 1261.5,679.0 C1263.5,679.0 1266.0,672.8 1268.8,672.8 C1271.6,672.8 1274.8,685.8 1278.4,685.8 C1282.0,685.8 1286.8,664.6 1290.4,664.6 C1294.0,664.6 1296.4,679.0 1300.0,679.0 C1303.6,679.0 1308.4,679.0 1312.0,677.6 C1315.6,676.2 1318.8,670.4 1321.6,670.4 C1324.4,670.4 1326.1,672.4 1328.8,680.0 C1331.5,687.6 1334.8,707.8 1337.5,716.0 C1340.2,724.2 1341.0,729.4 1345.0,729.4 C1349.0,729.4 1357.0,728.0 1361.8,728.0 C1366.6,728.0 1369.4,741.0 1373.8,743.8 C1378.2,744.8 1385.1,744.8 1388.3,744.8 C1391.5,744.8 1390.3,724.4 1393.1,718.4 C1395.9,712.4 1401.1,708.8 1405.1,708.8 C1409.1,708.8 1412.8,720.8 1417.1,725.6 C1421.3,730.4 1426.8,737.6 1430.6,737.6 C1434.4,737.6 1438.0,724.6 1440.2,724.6 C1442.4,724.6 1441.8,735.2 1443.6,735.2 C1445.4,735.2 1447.2,731.3 1450.8,731.3 C1454.4,731.3 1460.8,739.5 1465.2,743.8 C1469.6,748.0 1473.6,756.8 1477.2,756.8 C1480.8,756.8 1483.2,747.2 1486.8,742.4 C1490.4,737.6 1494.4,732.4 1498.8,728.0 C1503.2,723.6 1508.9,720.2 1513.3,716.0 C1517.7,711.8 1522.5,702.5 1525.3,702.5 C1528.1,702.5 1527.1,713.6 1530.1,713.6 C1533.1,713.6 1539.9,686.2 1543.1,686.2 C1546.3,686.2 1547.1,699.1 1549.3,699.1 C1551.5,699.1 1553.3,699.1 1556.5,694.3 C1559.7,688.7 1565.4,672.3 1568.6,665.5 C1571.8,658.7 1573.0,665.5 1575.8,653.5 C1578.6,638.7 1582.8,599.1 1585.4,576.5 C1588.0,553.9 1589.2,528.5 1591.2,517.9 C1593.2,513.1 1594.8,517.9 1597.4,513.1 C1600.0,502.4 1604.2,453.9 1607.0,453.9 C1609.8,453.9 1612.0,463.6 1614.2,463.6 C1616.4,463.6 1617.9,458.4 1620.0,429.9 C1622.1,401.4 1623.5,292.5 1626.8,292.5 C1630.1,292.5 1635.8,300.5 1640.0,300.5 C1644.2,300.5 1648.4,264.0 1651.7,264.0 C1655.0,264.0 1657.5,267.7 1659.7,284.5 C1661.9,301.3 1662.3,346.1 1665.0,364.7 C1667.7,383.2 1671.9,395.8 1675.8,395.8 C1679.7,395.8 1684.3,369.6 1688.2,369.6 C1692.1,369.6 1696.1,408.4 1698.9,418.0 C1701.7,427.5 1702.1,420.3 1705.1,427.5 C1708.1,434.7 1714.1,445.3 1717.1,461.2 C1720.1,477.1 1719.9,522.7 1722.9,522.7 C1726.0,522.7 1732.4,490.0 1735.4,490.0 C1738.5,490.0 1739.4,515.0 1741.2,515.0 C1743.0,515.0 1743.8,515.0 1746.0,513.1 C1748.2,498.5 1752.2,443.2 1754.6,427.5 C1757.0,418.8 1757.7,418.8 1760.4,418.8 C1763.1,418.8 1768.0,429.2 1771.0,437.1 C1774.0,445.0 1775.7,466.0 1778.7,466.0 C1781.7,466.0 1786.2,410.7 1789.2,410.7 C1792.2,410.7 1792.4,458.8 1796.4,458.8 C1800.4,458.8 1808.5,444.3 1813.3,444.3 C1818.1,444.3 1822.1,490.0 1825.3,490.0 C1828.5,490.0 1830.3,484.2 1832.5,484.2 C1834.7,484.2 1836.3,502.0 1838.3,502.0 C1840.3,502.0 1841.5,450.2 1844.5,439.5 C1847.5,438.0 1853.5,438.0 1856.5,438.0 C1859.5,438.0 1859.9,475.6 1862.3,475.6 C1864.7,475.6 1867.5,457.3 1871.0,457.3 C1874.5,457.3 1879.0,460.4 1883.0,461.2 C1887.0,462.0 1891.4,461.2 1895.0,462.1 C1898.6,466.9 1902.0,490.0 1904.6,490.0 C1907.2,490.0 1907.6,478.0 1910.4,478.0 C1913.2,478.0 1917.2,494.7 1921.4,498.7 C1925.7,502.0 1931.6,502.0 1935.9,502.0 C1940.2,502.0 1944.1,462.6 1947.2,462.6 C1950.3,462.6 1951.6,467.4 1954.4,467.4 C1957.2,467.4 1960.4,442.9 1964.0,431.3 C1967.6,419.7 1972.2,397.7 1976.0,397.7 C1979.8,397.7 1983.9,421.3 1987.1,426.5 C1990.3,428.9 1991.9,428.9 1995.3,428.9 C1998.7,428.9 2003.8,396.7 2007.3,396.7 C2010.8,396.7 2013.0,401.1 2016.0,402.5 C2019.0,403.9 2023.4,402.5 2025.6,404.9 C2027.8,416.9 2027.1,459.4 2028.9,474.6 C2030.7,489.8 2033.8,496.3 2036.2,496.3 C2038.6,496.3 2041.4,481.8 2043.4,481.8 C2045.4,481.8 2045.8,497.4 2048.2,501.0 C2050.6,503.5 2054.6,503.5 2057.8,503.5 C2061.0,503.5 2063.8,489.0 2067.4,489.0 C2071.0,489.0 2075.8,497.7 2079.4,497.7 C2083.0,497.7 2086.2,451.7 2089.0,436.2 C2091.8,420.7 2093.9,404.9 2096.3,404.9 C2098.7,404.9 2100.6,416.9 2103.5,416.9 C2106.4,416.9 2111.0,388.0 2114.0,388.0 C2117.0,388.0 2118.6,416.5 2121.7,424.1 C2124.8,431.7 2129.9,424.1 2132.3,433.8 C2134.7,466.2 2134.8,572.7 2136.2,618.8 C2137.6,664.9 2139.2,694.6 2141.0,710.2 C2142.8,712.6 2144.0,712.6 2146.7,712.6 C2149.4,712.6 2153.7,705.4 2157.3,705.4 C2160.9,705.4 2164.6,715.8 2168.4,724.6 C2172.2,733.4 2176.8,752.5 2180.4,758.3 C2184.0,759.2 2187.2,759.2 2190.0,759.2 C2192.8,759.2 2194.8,739.0 2197.2,739.0 C2199.6,739.0 2200.8,739.8 2204.4,741.4 C2208.0,743.0 2214.8,748.7 2218.8,748.7 C2222.8,748.7 2224.7,717.1 2228.5,707.8 C2232.3,698.5 2238.4,692.9 2241.7,692.9 C2245.0,692.9 2246.4,698.1 2248.4,699.8 C2250.4,701.5 2251.7,700.7 2253.7,703.0 C2255.7,705.3 2258.3,711.6 2260.4,713.7 C2262.5,715.9 2263.6,715.9 2266.5,715.9 C2269.4,715.9 2275.1,705.7 2277.7,705.7 C2280.2,705.7 2280.5,705.7 2281.8,713.7 C2283.2,722.0 2284.4,741.3 2285.8,755.7 C2287.2,770.1 2285.8,800.0 2290.0,800.0 C2295.4,800.0 2312.7,800.0 2318.0,800.0 C2321.8,800.0 2320.6,769.0 2321.8,755.7 C2323.0,742.4 2323.5,720.4 2325.3,720.4 C2327.1,720.4 2330.4,730.9 2332.5,735.1 C2334.6,739.3 2336.1,745.8 2337.9,745.8 C2339.7,745.8 2341.4,741.8 2343.2,741.8 C2345.0,741.8 2346.5,753.8 2348.5,753.8 C2350.5,753.8 2351.8,751.1 2355.2,751.1 C2358.5,751.1 2365.5,752.5 2368.6,752.5 C2371.7,752.5 2371.9,736.4 2373.9,736.4 C2375.9,736.4 2378.6,737.2 2380.6,740.4 C2382.6,743.6 2384.3,747.4 2385.9,755.7 C2387.5,764.0 2387.8,790.0 2390.0,790.0 C2392.2,790.0 2396.9,790.0 2399.0,790.0 C2401.1,790.0 2401.4,766.0 2402.8,755.7 C2404.2,745.4 2405.4,733.2 2407.3,728.4 C2409.2,727.1 2411.8,728.4 2414.0,727.1 C2416.2,725.5 2418.7,718.5 2420.7,718.5 C2422.7,718.5 2424.1,721.2 2426.1,721.2 C2428.1,721.2 2429.6,718.5 2432.7,718.5 C2435.8,718.5 2441.8,718.5 2444.7,721.7 C2447.6,725.8 2448.1,739.3 2450.1,743.1 C2452.1,744.5 2454.5,744.5 2456.7,744.5 C2458.9,744.5 2461.2,736.4 2463.4,736.4 C2465.6,736.4 2467.9,743.6 2470.1,745.8 C2472.3,748.0 2474.8,748.5 2476.8,749.8 C2478.8,751.1 2480.1,753.8 2482.1,753.8 C2484.1,753.8 2486.1,752.2 2488.8,751.1 C2491.5,750.0 2494.2,747.1 2498.2,747.1 C2502.2,747.1 2509.3,747.1 2512.9,747.1 C2516.5,747.1 2517.8,754.7 2520.0,754.7 C2522.2,754.7 2524.8,748.3 2526.4,746.7 C2528.0,745.1 2528.0,745.1 2529.6,745.1 C2531.2,745.1 2534.4,745.1 2536.0,745.9 C2537.6,746.8 2538.4,748.9 2539.2,750.7 C2540.0,752.6 2539.8,750.7 2540.8,757.0 C2541.8,765.2 2540.8,800.0 2545.0,800.0 C2558.2,800.0 2606.4,800.0 2620.0,800.0 C2626.6,800.0 2624.6,778.1 2626.6,772.3 C2628.6,766.5 2630.2,768.0 2632.2,765.1 C2634.2,762.2 2636.2,757.6 2638.6,754.7 C2641.0,751.8 2644.8,749.5 2646.7,747.5 C2648.6,745.5 2649.0,747.5 2649.9,742.7 C2650.8,736.8 2651.5,720.5 2652.3,712.2 C2653.1,703.9 2653.8,696.6 2654.7,693.0 C2655.6,690.6 2656.4,690.6 2657.9,690.6 C2659.4,690.6 2661.9,693.1 2663.5,695.4 C2665.1,697.7 2666.7,701.8 2667.5,704.2 C2668.3,706.6 2668.2,708.9 2668.3,709.8" fill="none" stroke="#5ec48a" stroke-width="2.3" stroke-linejoin="round"/>
<path d="M172.6,965.0 C173.6,962.4 176.3,949.5 178.4,949.5 C180.5,949.5 182.6,953.0 185.0,953.0 C187.4,953.0 190.6,953.0 192.6,951.8 C194.6,945.3 195.7,929.6 197.0,914.0 C198.3,898.4 198.9,867.7 200.6,858.0 C202.3,856.0 205.1,856.0 207.3,856.0 C209.5,856.0 210.7,863.7 214.0,867.0 C217.3,870.3 224.2,876.0 227.3,876.0 C230.4,876.0 230.4,863.5 232.3,856.0 C234.2,848.5 236.9,844.0 238.7,830.7 C240.5,817.4 241.1,790.3 242.9,776.0 C244.7,761.7 247.8,761.3 249.6,745.0 C251.4,728.7 252.5,707.7 254.0,678.0 C255.5,648.3 257.2,592.1 258.5,567.0 C259.8,541.9 260.1,527.6 262.0,527.6 C263.9,527.6 266.6,572.5 269.6,593.5 C272.6,614.5 276.8,653.5 279.8,653.5 C282.8,653.5 285.4,613.9 287.4,598.0 C289.4,582.1 289.9,558.0 291.8,558.0 C293.7,558.0 296.3,558.0 298.5,560.0 C300.7,577.4 303.0,662.5 305.2,662.5 C307.4,662.5 309.7,626.2 311.9,618.0 C314.1,613.5 316.8,613.5 318.6,613.5 C320.5,613.5 321.5,629.0 323.0,629.0 C324.5,629.0 325.3,607.0 327.5,607.0 C329.7,607.0 333.4,611.0 336.4,611.0 C339.4,611.0 342.6,600.5 345.3,593.5 C348.0,586.5 350.2,569.0 352.8,569.0 C355.4,569.0 357.8,651.0 360.8,651.0 C363.8,651.0 366.9,644.7 370.6,644.7 C374.3,644.7 379.1,664.7 383.0,664.7 C386.9,664.7 390.1,633.5 394.2,633.5 C398.3,633.5 403.5,678.0 407.6,678.0 C411.7,678.0 415.0,671.0 418.7,671.0 C422.4,671.0 426.8,702.5 429.8,702.5 C432.8,702.5 433.9,702.5 436.5,696.0 C439.1,682.6 442.4,638.4 445.4,622.4 C448.4,606.4 451.0,600.0 454.3,600.0 C457.6,600.0 462.1,611.0 465.0,611.0 C467.9,611.0 469.6,610.0 472.0,610.0 C474.4,610.0 477.2,643.7 479.2,643.7 C481.2,643.7 482.0,622.0 484.0,622.0 C486.0,622.0 489.3,646.0 491.3,646.0 C493.3,646.0 494.2,642.2 496.0,629.0 C497.8,615.8 500.3,566.7 502.3,566.7 C504.3,566.7 505.8,586.0 508.0,586.0 C510.2,586.0 512.9,586.0 515.3,578.7 C517.7,565.0 520.5,532.5 522.5,504.0 C524.5,475.6 524.5,428.8 527.3,408.0 C530.1,387.2 536.2,379.0 539.3,379.0 C542.3,379.0 543.6,379.0 545.6,389.0 C547.6,403.5 548.7,465.8 551.3,465.8 C553.9,465.8 558.0,420.1 561.0,410.5 C564.0,408.0 567.2,408.0 569.6,408.0 C572.0,408.0 572.4,421.4 575.4,425.0 C578.4,428.6 584.6,425.7 587.4,429.7 C590.2,433.7 590.2,449.0 592.2,449.0 C594.2,449.0 596.2,444.1 599.4,441.7 C602.6,439.3 608.3,437.7 611.4,434.5 C614.5,431.3 615.3,422.5 617.7,422.5 C620.1,422.5 623.4,437.8 625.9,461.0 C628.4,484.2 630.4,562.0 633.0,562.0 C635.6,562.0 639.3,533.0 641.7,533.0 C644.1,533.0 644.9,569.6 647.5,586.0 C650.1,602.4 653.9,631.6 657.1,631.6 C660.3,631.6 663.5,607.6 666.7,607.6 C669.9,607.6 673.5,612.4 676.3,612.4 C679.1,612.4 681.2,607.6 683.6,607.6 C686.0,607.6 688.0,610.0 690.8,610.0 C693.6,610.0 697.2,581.9 700.4,566.7 C703.6,551.5 706.4,518.7 710.0,518.7 C713.6,518.7 718.4,529.6 722.0,538.0 C725.6,546.4 729.0,569.0 731.6,569.0 C734.2,569.0 735.1,526.0 737.9,526.0 C740.7,526.0 744.5,559.5 748.5,566.7 C752.5,569.4 759.1,566.7 762.2,569.4 C765.3,582.3 765.0,644.0 767.0,644.0 C769.0,644.0 772.2,634.3 774.2,634.3 C776.2,634.3 777.0,660.0 779.0,665.6 C781.0,668.0 784.0,665.8 786.3,668.0 C788.5,670.2 790.5,679.0 792.5,679.0 C794.5,679.0 796.5,679.0 798.3,646.3 C800.1,611.6 801.4,470.9 803.1,470.9 C804.9,470.9 806.4,615.0 808.8,615.0 C811.2,615.0 815.0,601.0 817.5,596.5 C820.0,592.0 821.7,594.1 823.5,588.0 C825.3,581.9 825.9,559.8 828.1,559.8 C830.3,559.8 834.1,607.1 836.7,622.3 C839.4,637.5 841.4,635.8 844.0,651.0 C846.6,666.2 849.3,713.7 852.1,713.7 C854.9,713.7 857.8,667.2 860.8,656.0 C863.8,646.3 866.8,653.1 870.4,646.3 C874.0,639.5 879.6,615.0 882.4,615.0 C885.2,615.0 885.2,640.6 887.2,640.6 C889.2,640.6 892.4,629.5 894.4,629.5 C896.4,629.5 897.2,641.5 899.2,641.5 C901.2,641.5 904.0,574.0 906.4,574.0 C908.8,574.0 910.9,600.2 913.7,607.9 C916.5,615.6 920.5,620.0 923.3,620.0 C926.1,620.0 927.3,600.7 930.5,600.7 C933.7,600.7 939.3,600.7 942.5,600.7 C945.7,600.7 947.5,620.0 949.7,626.0 C952.0,632.0 953.6,627.7 956.0,636.7 C958.4,645.7 960.7,672.0 964.1,680.0 C967.5,684.8 973.8,682.5 976.2,684.8 C978.6,687.0 977.4,693.5 978.6,693.5 C979.8,693.5 981.4,682.4 983.4,682.4 C985.4,682.4 986.6,711.3 990.6,711.3 C994.6,711.3 1003.4,680.0 1007.4,680.0 C1011.4,680.0 1011.4,727.3 1014.6,742.5 C1017.8,757.7 1023.5,771.3 1026.6,771.3 C1029.6,771.3 1030.9,704.0 1032.9,704.0 C1034.9,704.0 1036.0,725.7 1038.7,725.7 C1041.4,725.7 1046.4,677.6 1049.2,677.6 C1052.0,677.6 1053.7,687.2 1055.8,687.2 C1057.9,687.2 1059.9,684.8 1062.0,684.8 C1064.1,684.8 1065.5,692.1 1068.3,694.4 C1071.1,696.6 1075.6,697.1 1078.8,698.3 C1082.0,699.5 1085.2,701.6 1087.5,701.6 C1089.8,701.6 1089.7,694.4 1092.3,694.4 C1094.9,694.4 1099.9,696.8 1102.9,696.8 C1105.9,696.8 1107.7,669.2 1110.1,663.2 C1112.5,660.8 1114.3,660.8 1117.3,660.8 C1120.3,660.8 1124.9,669.4 1127.9,669.4 C1131.0,669.4 1132.5,668.0 1135.6,663.2 C1138.6,658.4 1142.7,640.6 1146.2,640.6 C1149.7,640.6 1153.5,666.5 1156.7,666.5 C1159.9,666.5 1162.4,663.2 1165.4,663.2 C1168.5,663.2 1171.4,667.2 1175.0,670.4 C1178.6,673.6 1183.8,682.4 1187.0,682.4 C1190.2,682.4 1191.8,677.6 1194.2,677.6 C1196.6,677.6 1199.0,683.8 1201.4,683.8 C1203.8,683.8 1205.9,646.6 1208.7,632.0 C1211.5,617.4 1215.8,595.9 1218.3,595.9 C1220.8,595.9 1221.2,617.5 1224.0,617.5 C1226.8,617.5 1232.0,567.0 1235.1,567.0 C1238.1,567.0 1240.3,567.0 1242.3,574.2 C1244.3,582.2 1244.7,606.6 1247.1,615.0 C1249.5,623.4 1253.5,624.7 1256.7,624.7 C1259.9,624.7 1262.7,605.5 1266.3,605.5 C1269.9,605.5 1274.4,622.3 1278.4,622.3 C1282.4,622.3 1287.4,605.5 1290.4,605.5 C1293.4,605.5 1293.4,639.1 1296.2,639.1 C1299.0,639.1 1304.2,627.1 1307.2,627.1 C1310.2,627.1 1312.0,632.7 1314.4,634.3 C1316.8,635.9 1318.8,634.3 1321.6,636.7 C1324.4,640.3 1328.5,648.8 1331.3,656.0 C1334.1,663.2 1336.2,680.0 1338.5,680.0 C1340.8,680.0 1342.3,672.3 1345.0,670.3 C1347.7,668.3 1351.5,670.3 1354.6,667.9 C1357.6,665.2 1360.9,654.4 1363.3,654.4 C1365.7,654.4 1367.1,659.2 1369.0,665.5 C1370.9,671.8 1372.8,691.9 1374.8,691.9 C1376.8,691.9 1379.0,683.1 1381.1,677.5 C1383.2,671.9 1384.3,665.5 1387.3,658.3 C1390.2,651.1 1395.0,634.2 1398.8,634.2 C1402.6,634.2 1406.5,641.9 1409.9,648.7 C1413.4,655.5 1416.3,669.9 1419.5,675.1 C1422.7,679.9 1425.5,679.9 1429.1,679.9 C1432.7,679.9 1438.4,655.9 1441.2,655.9 C1444.0,655.9 1443.6,675.1 1446.0,675.1 C1448.4,675.1 1452.4,675.1 1455.6,675.1 C1458.8,675.1 1461.4,680.7 1465.2,687.1 C1469.0,693.5 1475.2,713.6 1478.2,713.6 C1481.2,713.6 1481.7,682.9 1483.5,675.1 C1485.3,667.3 1487.0,666.9 1489.2,666.9 C1491.4,666.9 1494.4,668.9 1496.4,672.7 C1498.4,676.5 1498.5,689.5 1501.3,689.5 C1504.1,689.5 1509.3,671.1 1513.3,665.5 C1517.3,659.9 1522.5,655.9 1525.3,655.9 C1528.1,655.9 1527.7,671.7 1530.1,671.7 C1532.5,671.7 1536.9,652.5 1539.7,652.5 C1542.5,652.5 1544.1,659.2 1546.9,659.2 C1549.7,659.2 1554.1,659.2 1556.5,659.2 C1558.9,659.2 1558.9,650.3 1561.3,647.7 C1563.7,645.1 1567.7,647.7 1570.9,643.8 C1574.1,637.5 1577.4,629.8 1580.6,610.2 C1583.8,590.6 1587.4,541.2 1590.2,526.0 C1593.0,518.8 1594.6,526.0 1597.4,518.8 C1600.2,507.6 1604.6,458.8 1607.0,458.8 C1609.4,458.8 1610.0,465.8 1611.8,468.4 C1613.6,471.0 1616.2,474.6 1618.1,474.6 C1619.9,474.6 1621.3,413.3 1622.9,389.0 C1624.5,364.7 1625.9,328.9 1627.7,328.9 C1629.5,328.9 1630.9,346.9 1634.0,346.9 C1637.1,346.9 1643.3,343.1 1646.4,337.0 C1649.5,330.9 1650.5,310.3 1652.6,310.3 C1654.7,310.3 1657.2,310.3 1658.8,311.2 C1660.4,326.2 1661.4,383.1 1662.4,400.3 C1663.4,414.5 1662.8,411.6 1665.0,414.5 C1667.2,417.4 1672.8,418.0 1675.8,418.0 C1678.8,418.0 1680.9,413.5 1682.9,409.2 C1684.9,404.9 1686.3,392.3 1687.9,392.3 C1689.5,392.3 1690.4,417.9 1692.7,423.4 C1695.0,425.1 1697.6,423.4 1701.7,425.1 C1705.8,432.2 1713.3,450.8 1717.1,466.0 C1720.9,481.2 1721.2,516.4 1724.3,516.4 C1727.3,516.4 1732.6,437.1 1735.4,437.1 C1738.2,437.1 1739.4,465.0 1741.2,465.0 C1743.0,465.0 1743.8,465.0 1746.0,458.8 C1748.2,443.3 1751.4,372.2 1754.6,372.2 C1757.8,372.2 1761.4,384.9 1765.2,392.9 C1769.0,400.9 1774.0,420.3 1777.2,420.3 C1780.4,420.3 1782.0,383.3 1784.4,383.3 C1786.8,383.3 1789.6,383.3 1791.6,386.6 C1793.6,394.8 1793.6,432.3 1796.4,432.3 C1799.2,432.3 1804.9,428.9 1808.5,428.9 C1812.1,428.9 1815.3,431.5 1818.1,441.9 C1820.9,452.2 1822.9,491.0 1825.3,491.0 C1827.7,491.0 1830.3,468.4 1832.5,468.4 C1834.7,468.4 1836.5,494.8 1838.3,494.8 C1840.1,494.8 1840.5,436.2 1843.1,436.2 C1845.7,436.2 1850.9,436.4 1854.1,445.8 C1857.3,455.2 1860.1,492.4 1862.3,492.4 C1864.5,492.4 1865.2,452.5 1867.1,452.5 C1868.9,452.5 1871.2,463.6 1873.4,463.6 C1875.7,463.6 1878.6,463.6 1880.6,463.6 C1882.6,463.6 1883.0,495.0 1885.4,502.0 C1887.8,505.4 1891.8,502.6 1895.0,505.4 C1898.2,508.2 1902.2,518.8 1904.6,518.8 C1907.0,518.8 1906.6,492.4 1909.4,492.4 C1912.2,492.4 1916.8,509.2 1921.4,509.2 C1926.1,509.2 1933.2,509.2 1937.3,503.5 C1941.4,496.0 1943.3,464.0 1945.8,464.0 C1948.2,464.0 1949.0,468.8 1952.0,468.8 C1955.0,468.8 1960.0,448.4 1964.0,441.0 C1968.0,433.6 1972.4,424.1 1976.0,424.1 C1979.6,424.1 1981.7,455.4 1985.7,455.4 C1989.7,455.4 1996.5,433.8 2000.1,433.8 C2003.7,433.8 2004.9,433.8 2007.3,436.2 C2009.7,441.0 2011.5,457.8 2014.5,462.6 C2017.5,465.0 2022.4,462.6 2025.6,465.0 C2028.8,470.6 2031.1,496.3 2033.8,496.3 C2036.5,496.3 2039.3,475.6 2041.9,475.6 C2044.5,475.6 2046.5,521.7 2049.6,521.7 C2052.6,521.7 2056.4,511.3 2060.2,505.9 C2064.0,500.4 2068.8,489.0 2072.2,489.0 C2075.6,489.0 2077.4,496.3 2080.4,496.3 C2083.4,496.3 2086.9,444.8 2090.0,444.8 C2093.1,444.8 2096.4,444.8 2098.7,445.8 C2100.9,448.8 2100.9,462.6 2103.5,462.6 C2106.1,462.6 2111.0,462.6 2114.0,462.6 C2117.0,462.6 2119.0,493.8 2121.7,493.8 C2124.3,493.8 2127.7,489.0 2129.9,489.0 C2132.1,489.0 2133.5,490.7 2134.7,513.1 C2135.9,535.6 2135.1,623.7 2137.1,623.7 C2139.1,623.7 2143.3,605.6 2146.7,594.8 C2150.1,584.0 2153.7,558.8 2157.3,558.8 C2160.9,558.8 2164.6,600.4 2168.4,614.0 C2172.2,627.6 2177.2,640.5 2180.4,640.5 C2183.6,640.5 2185.6,625.1 2187.6,621.3 C2189.6,617.9 2190.4,621.3 2192.4,617.9 C2194.4,612.3 2196.4,587.6 2199.6,587.6 C2202.8,587.6 2207.6,622.7 2211.6,622.7 C2215.6,622.7 2220.1,592.7 2223.7,580.4 C2227.3,568.1 2229.6,549.1 2233.3,549.1 C2237.0,549.1 2242.5,554.0 2245.7,557.4 C2248.9,560.8 2250.2,561.9 2252.4,569.5 C2254.6,577.1 2257.1,602.9 2259.0,602.9 C2260.9,602.9 2261.7,585.5 2263.9,585.5 C2266.1,585.5 2270.1,585.5 2272.4,585.5 C2274.7,585.5 2276.1,579.6 2277.7,579.6 C2279.3,579.6 2280.0,586.3 2281.8,600.2 C2283.6,614.1 2286.2,663.0 2288.4,663.0 C2290.6,663.0 2292.9,628.2 2295.1,628.2 C2297.2,628.2 2299.3,663.0 2301.3,663.0 C2303.3,663.0 2305.0,635.7 2307.1,635.7 C2309.2,635.7 2311.6,643.0 2313.8,643.0 C2316.0,643.0 2318.6,620.0 2320.5,609.5 C2322.4,599.0 2323.8,580.1 2325.3,580.1 C2326.9,580.1 2327.7,608.6 2329.8,614.9 C2331.9,617.6 2335.9,615.8 2337.9,617.6 C2339.9,619.4 2339.9,619.6 2341.9,625.6 C2343.9,631.6 2347.2,648.3 2349.9,653.6 C2352.6,657.6 2355.0,653.9 2357.9,657.6 C2360.8,661.3 2364.6,675.8 2367.2,675.8 C2369.8,675.8 2371.2,661.6 2373.4,661.6 C2375.6,661.6 2377.8,681.0 2380.6,692.4 C2383.4,703.8 2386.7,729.8 2390.0,729.8 C2393.3,729.8 2397.5,729.8 2400.6,729.8 C2403.7,729.8 2406.2,659.0 2408.7,659.0 C2411.1,659.0 2413.1,665.1 2415.3,665.1 C2417.5,665.1 2419.1,660.3 2422.0,660.3 C2424.9,660.3 2429.7,670.4 2432.7,670.4 C2435.7,670.4 2437.1,665.6 2440.2,665.6 C2443.3,665.6 2447.5,709.7 2451.4,709.7 C2455.3,709.7 2459.6,667.0 2463.4,667.0 C2467.2,667.0 2471.0,700.0 2474.1,707.1 C2477.2,709.7 2477.9,709.7 2482.1,709.7 C2486.3,709.7 2495.5,690.2 2499.5,690.2 C2503.5,690.2 2503.3,703.0 2506.2,707.1 C2509.1,711.2 2513.9,715.1 2516.9,715.1 C2519.9,715.1 2522.2,711.4 2524.0,711.4 C2525.8,711.4 2526.8,712.8 2528.0,715.4 C2529.2,718.0 2530.1,721.9 2531.2,726.7 C2532.3,731.5 2533.3,744.3 2534.4,744.3 C2535.5,744.3 2536.4,740.8 2537.6,739.5 C2538.8,738.2 2540.4,736.3 2541.6,736.3 C2542.8,736.3 2543.7,739.2 2544.8,742.7 C2545.9,746.2 2546.9,751.6 2548.1,757.0 C2549.3,762.4 2550.5,775.0 2552.0,775.0 C2553.5,775.0 2555.4,762.6 2556.9,757.0 C2558.4,751.4 2559.4,744.6 2560.9,741.1 C2562.4,737.6 2564.2,736.0 2565.7,736.0 C2567.2,736.0 2568.0,738.8 2569.7,741.1 C2571.4,743.4 2573.7,747.2 2576.1,749.9 C2578.5,752.5 2581.8,754.5 2584.1,757.0 C2586.4,759.5 2587.6,765.0 2590.0,765.0 C2592.4,765.0 2596.6,757.8 2598.6,755.5 C2600.6,753.2 2599.7,751.5 2601.8,751.5 C2603.9,751.5 2609.1,754.7 2611.4,755.5 C2613.7,756.3 2613.9,756.3 2615.4,756.3 C2616.9,756.3 2618.3,750.7 2620.2,750.7 C2622.1,750.7 2624.9,760.3 2626.6,760.3 C2628.3,760.3 2629.3,760.3 2630.6,758.7 C2631.9,755.2 2633.3,746.7 2634.6,739.5 C2635.9,732.3 2637.4,719.5 2638.6,715.4 C2639.8,715.1 2640.2,715.4 2641.8,715.1 C2643.4,713.2 2646.7,709.5 2648.3,704.2 C2649.9,698.9 2650.7,695.4 2651.5,683.4 C2652.3,671.4 2652.3,641.7 2653.1,632.1 C2653.9,625.7 2655.0,625.7 2656.3,625.7 C2657.6,625.7 2659.6,632.6 2661.1,636.9 C2662.6,641.2 2663.9,644.9 2665.1,651.3 C2666.3,657.7 2667.8,671.4 2668.3,675.4" fill="none" stroke="#f5ca63" stroke-width="2.2" stroke-linejoin="round"/>
<line x1="169" y1="715" x2="2669" y2="715" stroke="#e8e8e8" stroke-width="2.1" stroke-dasharray="8.5 3.5"/>
<line x1="2669" y1="194" x2="2669" y2="993" stroke="#a8a8a8" stroke-width="2.1" stroke-dasharray="8 4"/>
<rect x="76" y="692" width="87" height="44" rx="7" fill="#000000"/>
<text x="89.5" y="721" font-family="&quot;Liberation Sans&quot;, sans-serif" font-size="23.5" fill="#ffffff" stroke="#ffffff" stroke-width="0.35" textLength="58.5" lengthAdjust="spacingAndGlyphs">4.20B</text>
<rect x="2677" y="692" width="72.5" height="44" rx="7" fill="#000000"/>
<text x="2692.5" y="721" font-family="&quot;Liberation Sans&quot;, sans-serif" font-size="23.5" fill="#ffffff" stroke="#ffffff" stroke-width="0.35" textLength="42.5" lengthAdjust="spacingAndGlyphs">2.02</text>
<circle cx="2668.3" cy="675.4" r="8.7" fill="#ffffff" stroke="#e5bf63" stroke-width="4"/>
<circle cx="2668.3" cy="709.8" r="8.7" fill="#ffffff" stroke="#5ec48a" stroke-width="4"/>
<text x="2626" y="954.5" font-family="&quot;Liberation Sans&quot;, sans-serif" font-weight="bold" font-size="34" fill="#a2a4a8" textLength="27.5" lengthAdjust="spacingAndGlyphs">ss</text>
<rect x="2218" y="756" width="409" height="209" rx="16" fill="#03050a"/>
<text x="2249" y="818" font-family="&quot;Liberation Sans&quot;, sans-serif" font-size="32" fill="#ffffff" stroke="#ffffff" stroke-width="0.5" textLength="230" lengthAdjust="spacingAndGlyphs">8 Jan 2026, 03:00</text>
<circle cx="2258" cy="871" r="8.1" fill="#e5bf63" stroke="#e4e7ec" stroke-width="3.8"/>
<text x="2276.6" y="882" font-family="&quot;Liberation Sans&quot;, sans-serif" font-size="30.5" fill="#d8dde6" stroke="#d8dde6" stroke-width="0.4" textLength="129.6" lengthAdjust="spacingAndGlyphs">XRP Price</text>
<text x="2524.3" y="882" font-family="&quot;Liberation Sans&quot;, sans-serif" font-size="30.5" fill="#ffffff" stroke="#ffffff" stroke-width="0.4" textLength="70.6" lengthAdjust="spacingAndGlyphs">$2.16</text>
<circle cx="2258" cy="914.5" r="8.1" fill="#5ec48a" stroke="#e4e7ec" stroke-width="3.8"/>
<text x="2277.4" y="926" font-family="&quot;Liberation Sans&quot;, sans-serif" font-size="30.5" fill="#d8dde6" stroke="#d8dde6" stroke-width="0.4" textLength="185.5" lengthAdjust="spacingAndGlyphs">Open Interest</text>
<text x="2504.8" y="926" font-family="&quot;Liberation Sans&quot;, sans-serif" font-size="30.5" fill="#ffffff" stroke="#ffffff" stroke-width="0.4" textLength="90.1" lengthAdjust="spacingAndGlyphs">$4.26B</text>
<rect x="2562" y="999.5" width="220" height="44.5" rx="7" fill="#000000"/>
<text x="2576" y="1028" font-family="&quot;Liberation Sans&quot;, sans-serif" font-size="23.5" fill="#ffffff" stroke="#ffffff" stroke-width="0.35" textLength="184" lengthAdjust="spacingAndGlyphs">8 Jan 2026, 03:00</text>
<path d="M174.5,1129.0 L185.3,1129.6 L190.8,1131.5 L204.3,1131.2 L245.1,1129.8 L326.6,1130.1 L356.5,1127.7 L394.6,1128.8 L421.7,1129.3 L481.5,1128.2 L487.0,1126.3 L491.8,1120.9 L503.3,1120.9 L516.8,1123.6 L520.1,1120.9 L523.6,1122.0 L526.4,1126.8 L533.2,1130.4 L544.0,1127.4 L568.5,1128.8 L571.2,1124.7 L579.3,1124.7 L587.0,1120.9 L595.7,1122.2 L601.1,1124.9 L622.8,1124.1 L633.7,1122.2 L645.9,1121.4 L650.0,1111.9 L657.6,1094.2 L663.6,1103.8 L669.6,1111.9 L677.2,1099.1 L681.3,1103.8 L684.0,1099.1 L689.4,1104.6 L694.8,1101.8 L701.6,1118.7 L707.1,1112.7 L709.8,1116.0 L713.9,1111.9 L723.4,1116.5 L728.8,1115.4 L734.2,1118.2 L737.5,1122.2 L741.0,1119.5 L750.5,1119.5 L769.6,1122.2 L780.4,1118.7 L791.3,1118.2 L800.8,1106.5 L807.6,1107.0 L815.8,1108.6 L823.4,1105.7 L829.3,1110.5 L840.2,1111.1 L850.0,1113.3 L857.1,1110.3 L863.9,1108.9 L884.2,1111.1 L895.1,1106.7 L906.0,1108.9 L911.4,1111.6 L919.6,1112.4 L925.0,1112.4 L927.7,1117.1 L933.2,1115.2 L941.3,1117.1 L948.1,1112.4 L954.9,1115.7 L973.9,1117.6 L982.1,1120.3 L997.0,1120.3 L1002.4,1115.2 L1012.0,1116.5 L1020.1,1119.0 L1028.3,1117.6 L1044.6,1117.1 L1060.9,1115.7 L1074.5,1118.4 L1082.6,1117.6 L1096.2,1120.3 L1104.3,1121.1 L1111.1,1125.2 L1126.1,1125.2 L1153.3,1127.4 L1207.6,1126.6 L1262.0,1126.6 L1267.4,1123.9 L1289.1,1123.9 L1319.0,1123.9 L1324.5,1126.0 L1384.2,1126.8 L1476.6,1126.0 L1487.5,1122.5 L1500.0,1123.0 L1538.0,1125.2 L1567.9,1123.0 L1608.7,1123.9 L1612.0,1118.4 L1619.6,1117.1 L1635.9,1119.2 L1649.5,1120.3 L1653.5,1123.0 L1717.4,1123.0 L1748.6,1119.2 L1771.7,1121.1 L1839.7,1123.0 L1880.4,1122.0 L1896.7,1119.2 L1929.3,1121.1 L1933.4,1123.9 L1989.1,1123.0 L2035.3,1125.2 L2046.2,1121.1 L2059.8,1120.3 L2067.9,1123.9 L2070.7,1121.1 L2097.8,1121.1 L2152.2,1122.5 L2176.6,1122.5 L2184.8,1118.4 L2188.9,1113.0 L2205.1,1085.4 L2206.5,1081.7 L2208.6,1078.4 L2210.4,1085.2 L2212.6,1076.6 L2214.9,1085.9 L2216.8,1082.6 L2218.6,1081.5 L2221.9,1080.3 L2224.4,1077.8 L2227.0,1085.2 L2230.8,1085.4 L2234.0,1084.0 L2236.8,1087.3 L2241.0,1089.0 L2242.9,1081.7 L2248.5,1081.2 L2252.7,1083.1 L2256.8,1076.6 L2259.6,1063.0 L2262.0,1062.6 L2264.3,1066.6 L2266.9,1064.4 L2271.8,1068.2 L2276.4,1065.7 L2281.1,1074.2 L2283.4,1082.2 L2289.5,1081.7 L2294.6,1073.8 L2297.4,1075.6 L2299.3,1074.4 L2302.5,1078.0 L2304.8,1078.4 L2308.6,1085.9 L2311.4,1086.3 L2316.0,1079.6 L2320.7,1087.3 L2324.9,1085.2 L2328.6,1082.2 L2330.5,1082.8 L2332.3,1078.0 L2335.1,1082.2 L2338.9,1080.3 L2343.5,1086.8 L2348.2,1089.9 L2351.0,1087.7 L2356.1,1095.2 L2360.8,1087.3 L2366.8,1089.1 L2370.1,1089.0 L2372.9,1085.6 L2377.1,1085.9 L2379.4,1084.0 L2381.7,1086.3 L2385.0,1085.9 L2387.8,1087.5 L2392.5,1080.3 L2396.6,1078.4 L2400.4,1082.2 L2403.6,1081.7 L2407.4,1081.2 L2411.6,1083.4 L2413.9,1084.0 L2417.6,1087.3 L2421.3,1085.2 L2424.1,1088.2 L2428.8,1083.4 L2433.0,1086.8 L2440.0,1086.5 L2442.3,1089.3 L2447.0,1086.0 L2449.8,1087.4 L2452.6,1085.8 L2454.9,1086.8 L2457.7,1084.6 L2460.0,1085.5 L2463.3,1081.8 L2466.6,1073.9 L2470.8,1069.7 L2473.1,1058.0 L2475.4,1058.8 L2478.0,1056.6 L2480.5,1065.0 L2484.7,1063.2 L2489.4,1068.8 L2492.0,1073.9 L2494.1,1067.4 L2495.9,1069.0 L2499.2,1062.2 L2501.5,1064.6 L2503.8,1062.5 L2506.2,1066.6 L2509.9,1066.6 L2513.6,1069.7 L2515.5,1067.4 L2521.5,1068.8 L2527.1,1073.7 L2531.3,1072.2 L2541.1,1066.0 L2543.4,1068.3 L2545.8,1066.9 L2550.4,1069.4 L2555.6,1074.6 L2564.9,1067.4 L2571.4,1072.8 L2574.2,1082.3 L2576.1,1077.2 L2581.2,1084.1 L2584.9,1081.5 L2588.2,1081.8 L2592.4,1076.5 L2597.5,1079.5 L2600.3,1079.5 L2602.6,1086.5 L2606.8,1084.1 L2609.6,1079.0 L2614.7,1085.1 L2618.0,1085.5 L2622.7,1091.6 L2625.9,1085.5 L2635.7,1087.7 L2639.4,1090.2 L2642.2,1088.8 L2649.7,1091.1 L2653.9,1094.9 L2656.2,1092.1 L2659.5,1093.9 L2676.0,1095.0 L2676,1153.5 L174.5,1153.5 Z" fill="#0a1020"/>
<rect x="2189" y="1034" width="487" height="119.5" fill="#050a15"/>
<path d="M2189,1113 L2205.1,1085.4 L2206.5,1081.7 L2208.6,1078.4 L2210.4,1085.2 L2212.6,1076.6 L2214.9,1085.9 L2216.8,1082.6 L2218.6,1081.5 L2221.9,1080.3 L2224.4,1077.8 L2227.0,1085.2 L2230.8,1085.4 L2234.0,1084.0 L2236.8,1087.3 L2241.0,1089.0 L2242.9,1081.7 L2248.5,1081.2 L2252.7,1083.1 L2256.8,1076.6 L2259.6,1063.0 L2262.0,1062.6 L2264.3,1066.6 L2266.9,1064.4 L2271.8,1068.2 L2276.4,1065.7 L2281.1,1074.2 L2283.4,1082.2 L2289.5,1081.7 L2294.6,1073.8 L2297.4,1075.6 L2299.3,1074.4 L2302.5,1078.0 L2304.8,1078.4 L2308.6,1085.9 L2311.4,1086.3 L2316.0,1079.6 L2320.7,1087.3 L2324.9,1085.2 L2328.6,1082.2 L2330.5,1082.8 L2332.3,1078.0 L2335.1,1082.2 L2338.9,1080.3 L2343.5,1086.8 L2348.2,1089.9 L2351.0,1087.7 L2356.1,1095.2 L2360.8,1087.3 L2366.8,1089.1 L2370.1,1089.0 L2372.9,1085.6 L2377.1,1085.9 L2379.4,1084.0 L2381.7,1086.3 L2385.0,1085.9 L2387.8,1087.5 L2392.5,1080.3 L2396.6,1078.4 L2400.4,1082.2 L2403.6,1081.7 L2407.4,1081.2 L2411.6,1083.4 L2413.9,1084.0 L2417.6,1087.3 L2421.3,1085.2 L2424.1,1088.2 L2428.8,1083.4 L2433.0,1086.8 L2440.0,1086.5 L2442.3,1089.3 L2447.0,1086.0 L2449.8,1087.4 L2452.6,1085.8 L2454.9,1086.8 L2457.7,1084.6 L2460.0,1085.5 L2463.3,1081.8 L2466.6,1073.9 L2470.8,1069.7 L2473.1,1058.0 L2475.4,1058.8 L2478.0,1056.6 L2480.5,1065.0 L2484.7,1063.2 L2489.4,1068.8 L2492.0,1073.9 L2494.1,1067.4 L2495.9,1069.0 L2499.2,1062.2 L2501.5,1064.6 L2503.8,1062.5 L2506.2,1066.6 L2509.9,1066.6 L2513.6,1069.7 L2515.5,1067.4 L2521.5,1068.8 L2527.1,1073.7 L2531.3,1072.2 L2541.1,1066.0 L2543.4,1068.3 L2545.8,1066.9 L2550.4,1069.4 L2555.6,1074.6 L2564.9,1067.4 L2571.4,1072.8 L2574.2,1082.3 L2576.1,1077.2 L2581.2,1084.1 L2584.9,1081.5 L2588.2,1081.8 L2592.4,1076.5 L2597.5,1079.5 L2600.3,1079.5 L2602.6,1086.5 L2606.8,1084.1 L2609.6,1079.0 L2614.7,1085.1 L2618.0,1085.5 L2622.7,1091.6 L2625.9,1085.5 L2635.7,1087.7 L2639.4,1090.2 L2642.2,1088.8 L2649.7,1091.1 L2653.9,1094.9 L2656.2,1092.1 L2659.5,1093.9 L2676.0,1095.0 L2676,1153.5 L2189,1153.5 Z" fill="#202840"/>
<path d="M174.5,1129.0 L185.3,1129.6 L190.8,1131.5 L204.3,1131.2 L245.1,1129.8 L326.6,1130.1 L356.5,1127.7 L394.6,1128.8 L421.7,1129.3 L481.5,1128.2 L487.0,1126.3 L491.8,1120.9 L503.3,1120.9 L516.8,1123.6 L520.1,1120.9 L523.6,1122.0 L526.4,1126.8 L533.2,1130.4 L544.0,1127.4 L568.5,1128.8 L571.2,1124.7 L579.3,1124.7 L587.0,1120.9 L595.7,1122.2 L601.1,1124.9 L622.8,1124.1 L633.7,1122.2 L645.9,1121.4 L650.0,1111.9 L657.6,1094.2 L663.6,1103.8 L669.6,1111.9 L677.2,1099.1 L681.3,1103.8 L684.0,1099.1 L689.4,1104.6 L694.8,1101.8 L701.6,1118.7 L707.1,1112.7 L709.8,1116.0 L713.9,1111.9 L723.4,1116.5 L728.8,1115.4 L734.2,1118.2 L737.5,1122.2 L741.0,1119.5 L750.5,1119.5 L769.6,1122.2 L780.4,1118.7 L791.3,1118.2 L800.8,1106.5 L807.6,1107.0 L815.8,1108.6 L823.4,1105.7 L829.3,1110.5 L840.2,1111.1 L850.0,1113.3 L857.1,1110.3 L863.9,1108.9 L884.2,1111.1 L895.1,1106.7 L906.0,1108.9 L911.4,1111.6 L919.6,1112.4 L925.0,1112.4 L927.7,1117.1 L933.2,1115.2 L941.3,1117.1 L948.1,1112.4 L954.9,1115.7 L973.9,1117.6 L982.1,1120.3 L997.0,1120.3 L1002.4,1115.2 L1012.0,1116.5 L1020.1,1119.0 L1028.3,1117.6 L1044.6,1117.1 L1060.9,1115.7 L1074.5,1118.4 L1082.6,1117.6 L1096.2,1120.3 L1104.3,1121.1 L1111.1,1125.2 L1126.1,1125.2 L1153.3,1127.4 L1207.6,1126.6 L1262.0,1126.6 L1267.4,1123.9 L1289.1,1123.9 L1319.0,1123.9 L1324.5,1126.0 L1384.2,1126.8 L1476.6,1126.0 L1487.5,1122.5 L1500.0,1123.0 L1538.0,1125.2 L1567.9,1123.0 L1608.7,1123.9 L1612.0,1118.4 L1619.6,1117.1 L1635.9,1119.2 L1649.5,1120.3 L1653.5,1123.0 L1717.4,1123.0 L1748.6,1119.2 L1771.7,1121.1 L1839.7,1123.0 L1880.4,1122.0 L1896.7,1119.2 L1929.3,1121.1 L1933.4,1123.9 L1989.1,1123.0 L2035.3,1125.2 L2046.2,1121.1 L2059.8,1120.3 L2067.9,1123.9 L2070.7,1121.1 L2097.8,1121.1 L2152.2,1122.5 L2176.6,1122.5 L2184.8,1118.4 L2188.9,1113.0" fill="none" stroke="#3d5fb8" stroke-width="1.4"/>
<path d="M2188.9,1113 L2205.1,1085.4 L2206.5,1081.7 L2208.6,1078.4 L2210.4,1085.2 L2212.6,1076.6 L2214.9,1085.9 L2216.8,1082.6 L2218.6,1081.5 L2221.9,1080.3 L2224.4,1077.8 L2227.0,1085.2 L2230.8,1085.4 L2234.0,1084.0 L2236.8,1087.3 L2241.0,1089.0 L2242.9,1081.7 L2248.5,1081.2 L2252.7,1083.1 L2256.8,1076.6 L2259.6,1063.0 L2262.0,1062.6 L2264.3,1066.6 L2266.9,1064.4 L2271.8,1068.2 L2276.4,1065.7 L2281.1,1074.2 L2283.4,1082.2 L2289.5,1081.7 L2294.6,1073.8 L2297.4,1075.6 L2299.3,1074.4 L2302.5,1078.0 L2304.8,1078.4 L2308.6,1085.9 L2311.4,1086.3 L2316.0,1079.6 L2320.7,1087.3 L2324.9,1085.2 L2328.6,1082.2 L2330.5,1082.8 L2332.3,1078.0 L2335.1,1082.2 L2338.9,1080.3 L2343.5,1086.8 L2348.2,1089.9 L2351.0,1087.7 L2356.1,1095.2 L2360.8,1087.3 L2366.8,1089.1 L2370.1,1089.0 L2372.9,1085.6 L2377.1,1085.9 L2379.4,1084.0 L2381.7,1086.3 L2385.0,1085.9 L2387.8,1087.5 L2392.5,1080.3 L2396.6,1078.4 L2400.4,1082.2 L2403.6,1081.7 L2407.4,1081.2 L2411.6,1083.4 L2413.9,1084.0 L2417.6,1087.3 L2421.3,1085.2 L2424.1,1088.2 L2428.8,1083.4 L2433.0,1086.8 L2440.0,1086.5 L2442.3,1089.3 L2447.0,1086.0 L2449.8,1087.4 L2452.6,1085.8 L2454.9,1086.8 L2457.7,1084.6 L2460.0,1085.5 L2463.3,1081.8 L2466.6,1073.9 L2470.8,1069.7 L2473.1,1058.0 L2475.4,1058.8 L2478.0,1056.6 L2480.5,1065.0 L2484.7,1063.2 L2489.4,1068.8 L2492.0,1073.9 L2494.1,1067.4 L2495.9,1069.0 L2499.2,1062.2 L2501.5,1064.6 L2503.8,1062.5 L2506.2,1066.6 L2509.9,1066.6 L2513.6,1069.7 L2515.5,1067.4 L2521.5,1068.8 L2527.1,1073.7 L2531.3,1072.2 L2541.1,1066.0 L2543.4,1068.3 L2545.8,1066.9 L2550.4,1069.4 L2555.6,1074.6 L2564.9,1067.4 L2571.4,1072.8 L2574.2,1082.3 L2576.1,1077.2 L2581.2,1084.1 L2584.9,1081.5 L2588.2,1081.8 L2592.4,1076.5 L2597.5,1079.5 L2600.3,1079.5 L2602.6,1086.5 L2606.8,1084.1 L2609.6,1079.0 L2614.7,1085.1 L2618.0,1085.5 L2622.7,1091.6 L2625.9,1085.5 L2635.7,1087.7 L2639.4,1090.2 L2642.2,1088.8 L2649.7,1091.1 L2653.9,1094.9 L2656.2,1092.1 L2659.5,1093.9 L2676.0,1095.0" fill="none" stroke="#8aa2e4" stroke-width="1.4"/>
<rect x="2177" y="1080" width="28.5" height="33.7" rx="8" fill="#2e303d"/>
<rect x="2187" y="1090.5" width="2.6" height="12.3" fill="#8a8d9c"/><rect x="2193.1" y="1090.5" width="2.6" height="12.3" fill="#8a8d9c"/>
<rect x="2660" y="1080" width="28.5" height="33.7" rx="8" fill="#2e303d"/>
<rect x="2670" y="1090.5" width="2.6" height="12.3" fill="#8a8d9c"/><rect x="2676.1" y="1090.5" width="2.6" height="12.3" fill="#8a8d9c"/>
<rect x="2742" y="1172" width="60" height="60" rx="10" fill="#22252c"/>
<path d="M2774,1190 L2769.5,1187.5 L2766,1193 L2760,1194.8 L2761.2,1199.5 L2757,1204.2 L2762,1209" fill="none" stroke="#e6e9ef" stroke-width="3.2" stroke-linejoin="round"/>
</svg></body></html>
